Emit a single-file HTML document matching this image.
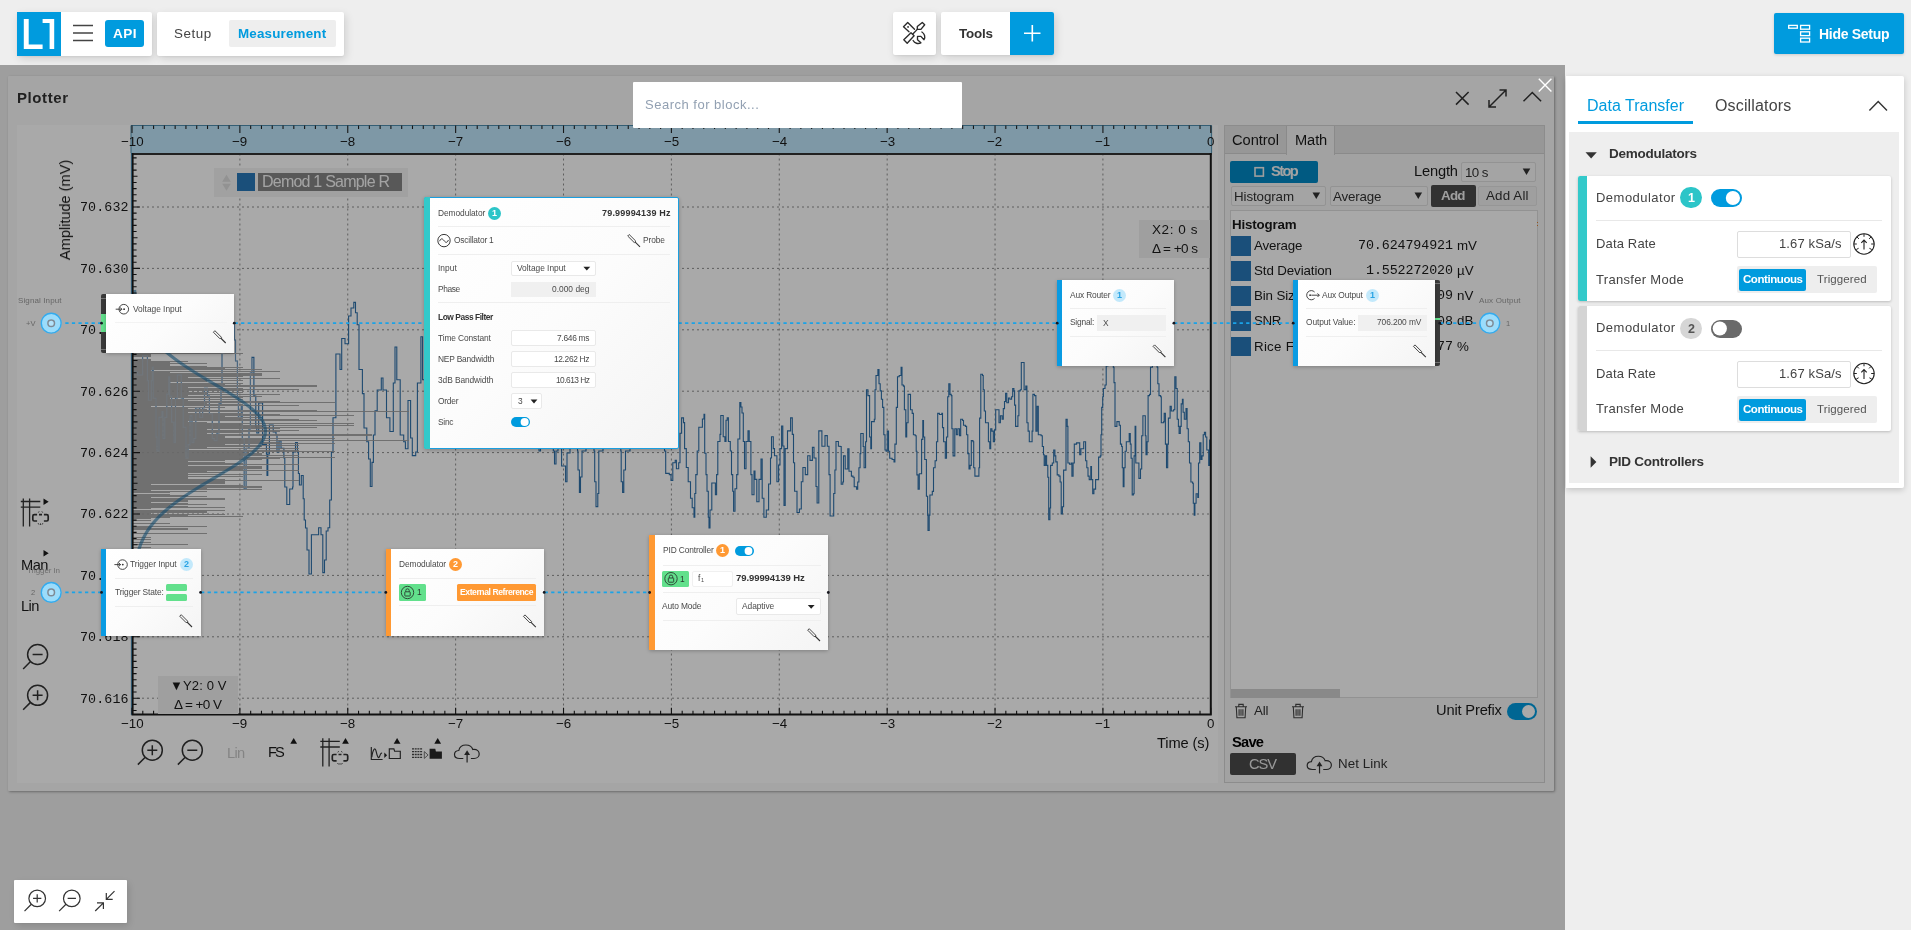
<!DOCTYPE html><html lang="en"><head><meta charset="utf-8"><title>LabOne</title><style>
*{box-sizing:border-box;margin:0;padding:0}
html,body{width:1911px;height:930px;overflow:hidden;background:#eeeeee;font-family:"Liberation Sans",sans-serif;}
.b{position:absolute;display:block}
.t{position:absolute;white-space:nowrap;}
.t{will-change:transform}
.card{position:absolute;background:#fff;border-radius:2px;box-shadow:2px 3px 8px rgba(0,0,0,.13),0 1px 2px rgba(0,0,0,.05)}
.blk{position:absolute;background:linear-gradient(135deg,#ffffff 0%,#fcfcfc 50%,#f4f4f4 100%);box-shadow:0 1px 4px rgba(0,0,0,.25)}
.dv{position:absolute;height:1px;background:#efefef}
</style></head><body>
<div class="card" style="left:17px;top:12px;width:135px;height:44px"></div>
<div class="b" style="left:17.00px;top:12.00px;width:44.00px;height:44.00px;background:#009bde;"></div>
<svg class="b" style="left:17px;top:12px;overflow:visible;" width="45" height="45" viewBox="0 0 45 45"><path d="M6.8 6.9h4.9v25.6h13.9v4.4H6.8z M25.6 6.9h11.6v30h-4.6V11.1h-7z" fill="#fff"/></svg>
<svg class="b" style="left:70px;top:20px;overflow:visible;" width="29" height="29" viewBox="0 0 29 29"><path d="M3 5.5h20M3 13h20M3 20.5h20" stroke="#444" stroke-width="1.5" fill="none"/></svg>
<div class="b" style="left:105.00px;top:20.00px;width:39.00px;height:27.00px;background:#009bde;border-radius:3px;"></div>
<div class="t" style="left:112.75px;top:24.68px;font-size:13.6px;line-height:17.68px;color:#fff;font-weight:bold;letter-spacing:0.414px;">API</div>
<div class="card" style="left:157px;top:12px;width:187px;height:44px"></div>
<div class="t" style="left:174.40px;top:24.79px;font-size:13.4px;line-height:17.42px;color:#444;letter-spacing:0.545px;">Setup</div>
<div class="b" style="left:229.00px;top:20.00px;width:107.00px;height:27.00px;background:#eeeeee;border-radius:2px;"></div>
<div class="t" style="left:238.40px;top:24.79px;font-size:13.4px;line-height:17.42px;color:#009bde;font-weight:bold;letter-spacing:0.181px;">Measurement</div>
<div class="card" style="left:893px;top:12px;width:43px;height:43px"></div>
<svg class="b" style="left:893px;top:12px;overflow:visible;" width="44" height="44" viewBox="0 0 44 44"><g fill="none" stroke="#2b2b2b" stroke-width="1.35" stroke-linejoin="round" stroke-linecap="round">
<path d="M21.500 17.300L14.700 10.500 10.500 14.700 16 19.700"/><circle cx="15.100" cy="15" r="0.300"/>
<path d="M10.800 27.700l3.400 3.500 6.900-7.500-3.100-3z"/><path d="M19.600 22.300l4.700-4.900"/>
<path d="M24.300 17.400v-2.900l5-4.100 2.400 2.400-3.800 4.600z"/>
<path d="M28.900 20c2.600 1.600 3.800 5 2.100 7.700l-3.100-3.300h-3.400v3.300l3.400 3.100c-2.900 1.600-6.300 0.400-7.800-2.300"/>
</g></svg>
<div class="card" style="left:941px;top:12px;width:113px;height:43px"></div>
<div class="t" style="left:958.70px;top:24.79px;font-size:13.4px;line-height:17.42px;color:#333;font-weight:bold;letter-spacing:-0.184px;">Tools</div>
<div class="b" style="left:1010.30px;top:12.00px;width:43.70px;height:43.00px;background:#009bde;border-radius:0 2px 2px 0;"></div>
<svg class="b" style="left:1010px;top:12px;overflow:visible;" width="45" height="44" viewBox="0 0 45 44"><g transform="translate(0.300,0.000)"><path d="M22 13.0v16.500M13.700 21.300h16.500" stroke="#fff" stroke-width="1.6" fill="none"/></g></svg>
<div class="b" style="left:1774.20px;top:13.00px;width:129.80px;height:41.00px;background:#009bde;border-radius:2px;box-shadow:0 1px 3px rgba(0,0,0,.15);"></div>
<svg class="b" style="left:1786px;top:22px;overflow:visible;" width="29" height="25" viewBox="0 0 29 25"><g fill="none" stroke="#fff" stroke-width="1.3"><rect x="2.7" y="3.4" width="8.6" height="2.8"/><rect x="14.6" y="3.4" width="9" height="3.8"/><rect x="14.6" y="9.8" width="9" height="3.8"/><rect x="14.6" y="16.2" width="9" height="3.8"/></g></svg>
<div class="t" style="left:1819.00px;top:25.24px;font-size:14px;line-height:18.2px;color:#fff;font-weight:bold;letter-spacing:-0.291px;">Hide Setup</div>
<div class="b" style="left:0;top:65px;width:1565px;height:865px;background:#eeeeee;overflow:hidden">
<div class="b" style="left:0;top:-65px;width:1911px;height:930px">
<div class="b" style="left:8.00px;top:76.00px;width:1546.00px;height:714.80px;background:#f9f9f9;box-shadow:1px 1px 2.5px rgba(0,0,0,.32);border-radius:1px;"></div>
<div class="t" style="left:17.00px;top:88.45px;font-size:15px;line-height:19.5px;color:#333;font-weight:bold;letter-spacing:0.582px;">Plotter</div>
<svg class="b" style="left:1452px;top:87px;overflow:visible;" width="101" height="25" viewBox="0 0 101 25"><g fill="none" stroke="#333" stroke-width="1.5" stroke-linecap="butt">
<path d="M4 5l12.6 12.6M16.6 5L4 17.6"/>
<path d="M37.500 19.500l16-16M47.500 3h6.500v6.500M37 13v7h7"/>
<path d="M71.5 14.3l8.8-8.8 8.8 8.8"/></g></svg>
<div class="b" style="left:17.00px;top:125.00px;width:1201.00px;height:658.00px;background:#ffffff;"></div>
<svg class="b" style="left:0px;top:0px;overflow:visible;" width="1231" height="801" viewBox="0 0 1231 801"><rect x="131" y="125" width="1080.6" height="28" fill="#bfe6fb"/><path d="M131 153V125.5H1211.6V153" fill="none" stroke="#4f8fb0" stroke-width="1"/><path d="M132.00 125.5v7.5M142.79 125.5v3.6M153.58 125.5v3.6M164.36 125.5v3.6M175.15 125.5v3.6M185.94 125.5v3.6M196.73 125.5v3.6M207.52 125.5v3.6M218.30 125.5v3.6M229.09 125.5v3.6M239.88 125.5v7.5M250.67 125.5v3.6M261.46 125.5v3.6M272.24 125.5v3.6M283.03 125.5v3.6M293.82 125.5v3.6M304.61 125.5v3.6M315.40 125.5v3.6M326.18 125.5v3.6M336.97 125.5v3.6M347.76 125.5v7.5M358.55 125.5v3.6M369.34 125.5v3.6M380.12 125.5v3.6M390.91 125.5v3.6M401.70 125.5v3.6M412.49 125.5v3.6M423.28 125.5v3.6M434.06 125.5v3.6M444.85 125.5v3.6M455.64 125.5v7.5M466.43 125.5v3.6M477.22 125.5v3.6M488.00 125.5v3.6M498.79 125.5v3.6M509.58 125.5v3.6M520.37 125.5v3.6M531.16 125.5v3.6M541.94 125.5v3.6M552.73 125.5v3.6M563.52 125.5v7.5M574.31 125.5v3.6M585.10 125.5v3.6M595.88 125.5v3.6M606.67 125.5v3.6M617.46 125.5v3.6M628.25 125.5v3.6M639.04 125.5v3.6M649.82 125.5v3.6M660.61 125.5v3.6M671.40 125.5v7.5M682.19 125.5v3.6M692.98 125.5v3.6M703.76 125.5v3.6M714.55 125.5v3.6M725.34 125.5v3.6M736.13 125.5v3.6M746.92 125.5v3.6M757.70 125.5v3.6M768.49 125.5v3.6M779.28 125.5v7.5M790.07 125.5v3.6M800.86 125.5v3.6M811.64 125.5v3.6M822.43 125.5v3.6M833.22 125.5v3.6M844.01 125.5v3.6M854.80 125.5v3.6M865.58 125.5v3.6M876.37 125.5v3.6M887.16 125.5v7.5M897.95 125.5v3.6M908.74 125.5v3.6M919.52 125.5v3.6M930.31 125.5v3.6M941.10 125.5v3.6M951.89 125.5v3.6M962.68 125.5v3.6M973.46 125.5v3.6M984.25 125.5v3.6M995.04 125.5v7.5M1005.83 125.5v3.6M1016.62 125.5v3.6M1027.40 125.5v3.6M1038.19 125.5v3.6M1048.98 125.5v3.6M1059.77 125.5v3.6M1070.56 125.5v3.6M1081.34 125.5v3.6M1092.13 125.5v3.6M1102.92 125.5v7.5M1113.71 125.5v3.6M1124.50 125.5v3.6M1135.28 125.5v3.6M1146.07 125.5v3.6M1156.86 125.5v3.6M1167.65 125.5v3.6M1178.44 125.5v3.6M1189.22 125.5v3.6M1200.01 125.5v3.6M1210.80 125.5v7.5" stroke="#222" stroke-width="1.1" fill="none"/><path d="M239.88 153.5V714.5M347.76 153.5V714.5M455.64 153.5V714.5M563.52 153.5V714.5M671.40 153.5V714.5M779.28 153.5V714.5M887.16 153.5V714.5M995.04 153.5V714.5M1102.92 153.5V714.5M132.0 207.00H1210.8M132.0 268.40H1210.8M132.0 329.80H1210.8M132.0 391.20H1210.8M132.0 452.60H1210.8M132.0 514.00H1210.8M132.0 575.40H1210.8M132.0 636.80H1210.8M132.0 698.20H1210.8" stroke="#8e8e8e" stroke-width="1" stroke-dasharray="2 3" fill="none"/><clipPath id="pc"><rect x="132.0" y="153.5" width="1078.8" height="561.0"/></clipPath><path clip-path="url(#pc)" d="M133.0,372.0H137.7V374.8H142.6V355.5H146.5V355.5H147.4V380.6H148.4V400.0H151.3V380.6H152.3V367.0H153.2V398.0H156.0V436.8H157.0V451.0H159.0V417.0H162.0V411.6H163.0V438.7H164.8V417.4H166.8V394.0H168.7V376.8H169.7V396.0H171.6V422.0H174.0V442.6H175.5V398.0H177.4V374.8H179.4V374.8H181.3V398.0H183.2V427.0H186.0V458.0H188.0V444.5H190.0V415.5H192.0V442.6H193.9V438.7H195.8V407.7H199.7V417.4H202.6V407.7H204.5V388.4H207.4V396.0H209.4V413.5H212.3V438.7H214.2V440.6H217.0V433.0H219.0V403.9H221.0V388.4H222.0V353.5H224.0V330.0H228.0V318.0H232.0V325.0H234.5V340.0H235.5V361.0H237.4V398.0H238.4V417.4H241.3V405.8H242.3V438.7H244.2V489.0H246.1V448.4H249.0V429.0H250.4V373.0H251.9V357.4H253.9V396.0H255.8V427.0H256.8V433.0H258.7V403.0H261.6V403.0H262.6V444.5H266.4V454.0H267.0V475.5H267.8V454.0H269.4V425.0H273.2V432.0H276.0V434.8H277.0V452.0H279.0V440.6H281.0V448.4H283.9V458.0H284.8V487.0H286.8V504.5H288.5V504.5H289.7V489.0H292.6V487.0H293.0V452.0H295.5V442.6H297.4V452.0H298.4V473.5H299.4V485.0H301.3V475.5H303.2V498.7H304.2V520.0H305.5V528.0H307.0V550.0H309.0V574.0H311.4V534.7H314.0V534.7H318.6V527.8H321.0V534.7H322.8V572.6H324.5V560.0H326.2V531.0H328.0V527.8H329.7V500.0H331.4V452.0H333.0V417.7H335.9V354.0H339.0V354.0H340.0V369.5H341.7V338.5H345.0V343.7H347.4V343.7H348.6V316.0H351.0V308.0H353.8V302.4H355.5V312.7H357.2V324.7H359.0V369.5H362.4V393.6H364.0V428.0H366.8V441.8H368.6V459.0H370.3V486.5H372.0V462.4H373.4V435.0H375.0V410.8H377.2V390.0H381.3V378.0H383.0V390.0H386.5V417.7H389.9V431.5H393.3V383.0H395.0V347.0H396.8V379.8H400.2V435.0H403.7V441.8H405.4V448.7H408.0V400.5H410.6V438.0H412.3V455.6H415.7V452.0H417.4V383.0H420.9V336.8H422.6V379.8H426.0V420.0H430.0V400.0H436.0V430.0H440.0V395.0H446.0V425.0H452.0V440.0H458.0V410.0H464.0V380.0H470.0V415.0H478.0V440.0H486.0V400.0H494.0V430.0H502.0V445.0H510.0V410.0H520.0V435.0H530.0V440.0H538.0V445.0H539.0V451.0H540.5V445.0H546.0V430.0H552.0V440.0H553.3V451.0H554.5V464.0H556.0V451.0H558.0V445.0H561.6V466.0H564.0V466.0H565.6V481.7H567.0V453.0H570.0V440.0H574.0V445.0H577.5V451.0H578.0V470.0H579.4V492.4H580.5V477.0H582.0V451.0H586.0V440.0H590.0V445.0H594.0V451.0H594.7V481.7H596.0V506.6H597.8V493.5H598.8V451.0H603.0V440.0H608.0V430.0H614.0V445.0H620.8V451.0H621.2V481.7H622.6V492.4H623.8V470.0H625.5V451.0H630.0V440.0H636.0V425.0H642.0V440.0H648.0V420.0H654.0V440.0H660.0V445.0H664.5V451.0H665.7V473.4H669.3V474.6H671.0V480.5H672.8V462.8H675.2V460.4H676.4V468.7H678.7V462.8H680.0V433.2H681.6V417.9H683.5V422.6H684.6V448.6H686.3V467.5H688.2V481.7H690.5V498.3H692.2V507.7H694.0V517.2H694.8V493.5H695.8V474.6H697.2V451.0H698.8V427.3H702.4V419.0H704.0V414.3H704.7V453.3H706.0V474.6H707.0V491.2H708.3V517.2H709.0V527.9H710.0V510.0H711.8V483.0H714.0V483.0H715.4V494.7H716.6V474.6H717.8V441.5H720.0V434.4H720.8V415.5H722.5V415.5H723.2V436.8H724.9V441.5H726.0V420.2H727.2V417.9H728.4V441.5H730.3V451.0H731.5V474.6H732.7V491.2H733.6V511.3H735.0V488.8H736.7V474.6H737.9V439.0H739.8V402.5H740.9V407.0H742.0V413.0H743.3V441.5H744.5V468.7H746.0V441.5H748.0V430.9H749.2V441.5H750.9V474.6H752.0V494.7H754.0V471.0H755.0V479.4H756.8V501.8H759.0V479.4H761.0V459.0H762.2V498.3H763.9V517.2H766.3V510.0H768.6V484.0H770.5V458.0H771.5V436.8H773.3V448.6H774.5V455.7H776.9V481.7H778.6V465.0H780.0V448.6H781.6V426.0H782.8V446.0H784.0V505.4H785.2V448.6H787.5V430.9H790.6V417.9H792.3V434.4H793.5V462.8H794.6V491.2H797.0V512.5H799.4V509.0H801.3V481.7H802.9V467.5H805.3V474.6H807.7V455.7H810.0V460.4H812.4V447.4H814.0V458.0H816.0V486.5H817.1V503.0H818.8V430.9H820.5V430.9H821.9V446.2H825.0V435.6H827.3V446.2H829.0V474.6H830.1V516.0H832.0V516.0H833.7V493.5H834.9V470.0H836.0V441.5H838.4V446.2H840.0V446.5H841.2V484.3H842.8V482.0H843.5V455.9H845.2V469.0H847.1V469.0H847.8V448.8H849.0V471.3H851.4V476.1H853.0V477.2H854.2V486.7H856.6V489.1H857.7V482.0H858.9V467.8H860.1V453.6H860.8V433.5H862.5V433.5H863.2V446.5H864.1V467.8H865.6V441.8H866.5V389.7H867.9V395.6H869.6V437.0H870.8V448.8H871.5V421.6H874.3V419.3H875.0V389.7H876.0V375.5H877.9V369.6H879.0V383.8H880.2V390.9H881.4V399.2H882.6V407.4H883.8V434.7H885.0V450.0H886.1V451.2H887.3V431.1H888.5V451.2H889.7V458.3H892.1V459.5H894.0V461.9H894.9V444.1H896.3V407.4H897.5V376.7H899.2V375.5H901.1V367.2H902.0V385.0H903.4V386.1H904.4V409.8H905.8V437.0H906.7V422.8H908.1V394.4H909.8V394.4H910.5V409.8H912.2V413.4H913.4V434.7H915.2V435.8H916.2V451.2H916.9V474.9H918.1V489.1H919.3V473.7H920.5V473.7H921.6V439.4H922.8V420.5H923.5V437.0H924.7V459.5H926.4V496.2H927.6V515.1H928.0V530.5H929.2V515.1H929.9V495.0H932.3V491.4H933.5V467.8H935.1V460.7H936.5V441.8H937.7V413.4H939.4V414.5H941.8V413.4H942.5V427.6H943.6V441.8H945.3V458.3H946.5V437.0H947.7V396.8H948.8V383.8H950.0V394.4H951.2V395.6H951.9V428.7H953.1V455.9H954.8V428.7H956.4V434.7H957.8V428.7H959.5V435.8H960.7V419.3H962.6V420.5H963.5V425.2H965.4V426.4H966.6V434.7H967.8V453.6H969.0V469.0H970.1V465.4H971.3V440.6H973.0V441.8H973.7V467.8H974.9V476.1H977.2V476.1H978.9V467.8H979.6V418.1H980.8V374.3H982.5V375.5H983.2V389.7H984.3V411.0H985.5V422.8H987.2V422.8H988.4V441.8H989.8V448.8H990.7V428.7H991.9V431.1H993.3V441.8H994.5V429.9H995.7V409.8H998.1V409.8H999.0V422.8H1000.4V415.7H1002.1V419.3H1003.3V408.6H1004.5V401.5H1005.6V393.2H1006.8V402.7H1008.5V398.0H1009.9V399.2H1011.6V396.8H1012.7V388.5H1013.9V390.9H1014.6V405.1H1015.6V426.4H1017.0V426.4H1017.9V415.7H1018.9V390.9H1020.3V389.7H1021.3V362.5H1023.4V362.5H1024.1V389.7H1025.8V386.1H1026.9V422.8H1028.1V431.1H1029.3V441.8H1031.2V441.8H1032.1V431.1H1032.9V394.4H1034.5V395.6H1035.9V431.1H1037.1V406.3H1038.3V434.7H1041.1V435.8H1042.3V446.5H1043.5V454.8H1044.2V465.4H1045.4V455.9H1046.6V465.4H1047.8V477.2H1048.7V519.8H1049.9V508.0H1050.6V465.4H1052.3V463.0H1053.7V450.0H1054.9V455.9H1055.8V461.9H1057.2V474.9H1058.9V476.1H1060.1V482.0H1061.2V513.9H1062.4V506.8H1063.6V470.1H1065.3V470.1H1066.0V419.3H1067.2V426.4H1067.9V463.0H1069.5V464.2H1071.2V463.0H1071.9V476.1H1073.1V463.0H1074.3V444.1H1076.6V442.9H1079.0V442.9H1079.7V454.8H1080.9V448.8H1082.5V448.8H1083.7V441.8H1084.9V441.8H1085.6V460.7H1086.8V467.8H1088.0V476.1H1089.2V479.6H1090.8V466.6H1091.5V479.6H1092.7V493.8H1093.9V489.1H1095.6V479.6H1097.9V479.6H1098.6V457.1H1100.3V455.9H1101.0V434.7H1101.7V407.4H1102.7V396.8H1103.4V388.5H1105.0V385.0H1106.2V366.0H1107.9V354.2H1109.8V349.5H1111.7V356.6H1113.3V367.2H1114.0V382.6H1115.0V426.4H1116.9V421.6H1119.2V425.2H1120.4V444.1H1121.6V446.5H1122.3V467.8H1123.2V486.7H1124.0V467.8H1125.1V451.2H1126.3V441.8H1128.2V441.8H1129.2V433.5H1130.3V444.1H1131.1V458.3H1132.2V495.0H1133.4V493.8H1134.1V455.9H1135.1V426.4H1135.8V463.0H1137.7V463.0H1138.9V478.4H1140.5V469.0H1141.7V435.8H1142.9V415.7H1144.1V415.7H1145.3V435.8H1146.0V454.8H1147.1V441.8H1148.1V395.6H1149.5V394.4H1150.5V367.2H1152.4V354.2H1154.7V351.8H1157.1V367.2H1157.8V383.8H1159.0V395.6H1160.6V396.8H1161.3V422.8H1163.7V421.6H1164.2V413.4H1165.4V444.1H1166.5V467.8H1167.7V444.1H1168.4V418.1H1170.1V406.3H1171.3V411.0H1173.6V409.8H1174.8V376.7H1176.0V388.5H1177.2V419.3H1178.4V426.4H1179.1V433.5H1180.3V426.4H1181.2V403.9H1182.4V399.2H1183.1V412.2H1184.3V419.3H1186.0V408.6H1187.1V428.7H1188.3V441.8H1189.5V463.0H1190.9V482.0H1192.6V483.2H1193.3V503.3H1194.2V515.1H1194.9V503.3H1196.1V493.8H1197.8V497.4H1198.5V463.0H1199.7V442.9H1200.9V459.5H1202.0V455.9H1203.2V434.7H1204.4V432.3H1205.6V437.0H1206.8V450.0H1208.0V450.0H1208.7V465.4H1209.6V439.4" fill="none" stroke="#2e70aa" stroke-width="1.1" stroke-linejoin="miter"/><path clip-path="url(#pc)" d="M133.0 302.5h18.4M133.0 312.5h18.4M133.0 314.5h36.8M133.0 316.5h18.4M133.0 317.5h18.4M133.0 321.5h18.4M133.0 322.5h36.8M133.0 323.5h18.4M133.0 326.5h18.4M133.0 327.5h18.4M133.0 328.5h18.4M133.0 329.5h36.8M133.0 330.5h36.8M133.0 331.5h18.4M133.0 332.5h18.4M133.0 333.5h36.8M133.0 334.5h18.4M133.0 335.5h73.6M133.0 336.5h55.2M133.0 337.5h73.6M133.0 338.5h73.6M133.0 339.5h36.8M133.0 340.5h18.4M133.0 343.5h18.4M133.0 344.5h18.4M133.0 345.5h18.4M133.0 346.5h92.0M133.0 347.5h73.6M133.0 348.5h18.4M133.0 349.5h36.8M133.0 350.5h18.4M133.0 351.5h55.2M133.0 352.5h73.6M133.0 353.5h110.4M133.0 354.5h18.4M133.0 355.5h18.4M133.0 356.5h18.4M133.0 359.5h18.4M133.0 360.5h18.4M133.0 361.5h55.2M133.0 362.5h36.8M133.0 363.5h73.6M133.0 364.5h36.8M133.0 365.5h36.8M133.0 366.5h73.6M133.0 367.5h110.4M133.0 368.5h92.0M133.0 369.5h128.8M133.0 370.5h18.4M133.0 371.5h147.2M133.0 372.5h36.8M133.0 373.5h128.8M133.0 374.5h128.8M133.0 375.5h128.8M133.0 376.5h110.4M133.0 377.5h55.2M133.0 378.5h147.2M133.0 379.5h73.6M133.0 380.5h110.4M133.0 381.5h73.6M133.0 382.5h36.8M133.0 383.5h110.4M133.0 384.5h92.0M133.0 385.5h184.0M133.0 386.5h184.0M133.0 387.5h55.2M133.0 388.5h110.4M133.0 389.5h165.6M133.0 390.5h110.4M133.0 391.5h55.2M133.0 392.5h110.4M133.0 393.5h73.6M133.0 394.5h147.2M133.0 395.5h55.2M133.0 396.5h128.8M133.0 397.5h110.4M133.0 398.5h36.8M133.0 399.5h110.4M133.0 400.5h55.2M133.0 401.5h147.2M133.0 402.5h202.4M133.0 403.5h73.6M133.0 404.5h110.4M133.0 405.5h165.6M133.0 406.5h18.4M133.0 407.5h92.0M133.0 408.5h55.2M133.0 409.5h73.6M133.0 410.5h184.0M133.0 411.5h276.0M133.0 412.5h55.2M133.0 413.5h110.4M133.0 414.5h147.2M133.0 415.5h220.8M133.0 416.5h92.0M133.0 417.5h128.8M133.0 418.5h110.4M133.0 419.5h165.6M133.0 420.5h184.0M133.0 421.5h55.2M133.0 422.5h73.6M133.0 423.5h220.8M133.0 424.5h110.4M133.0 425.5h220.8M133.0 426.5h128.8M133.0 427.5h184.0M133.0 428.5h147.2M133.0 429.5h73.6M133.0 430.5h165.6M133.0 431.5h147.2M133.0 432.5h110.4M133.0 433.5h73.6M133.0 434.5h239.2M133.0 435.5h239.2M133.0 436.5h92.0M133.0 437.5h92.0M133.0 438.5h202.4M133.0 439.5h128.8M133.0 440.5h276.0M133.0 441.5h128.8M133.0 442.5h147.2M133.0 443.5h202.4M133.0 444.5h92.0M133.0 445.5h165.6M133.0 446.5h128.8M133.0 447.5h73.6M133.0 448.5h165.6M133.0 449.5h55.2M133.0 450.5h165.6M133.0 451.5h202.4M133.0 452.5h110.4M133.0 453.5h128.8M133.0 454.5h128.8M133.0 455.5h165.6M133.0 456.5h110.4M133.0 457.5h202.4M133.0 458.5h147.2M133.0 459.5h128.8M133.0 460.5h92.0M133.0 461.5h55.2M133.0 462.5h92.0M133.0 463.5h110.4M133.0 464.5h165.6M133.0 465.5h55.2M133.0 466.5h128.8M133.0 467.5h128.8M133.0 468.5h128.8M133.0 469.5h110.4M133.0 470.5h165.6M133.0 471.5h73.6M133.0 472.5h92.0M133.0 473.5h55.2M133.0 474.5h128.8M133.0 475.5h55.2M133.0 476.5h110.4M133.0 477.5h55.2M133.0 478.5h55.2M133.0 479.5h92.0M133.0 480.5h165.6M133.0 481.5h92.0M133.0 482.5h92.0M133.0 483.5h92.0M133.0 484.5h18.4M133.0 485.5h110.4M133.0 486.5h128.8M133.0 487.5h128.8M133.0 488.5h73.6M133.0 489.5h128.8M133.0 490.5h18.4M133.0 491.5h73.6M133.0 492.5h36.8M133.0 494.5h36.8M133.0 495.5h55.2M133.0 496.5h73.6M133.0 497.5h18.4M133.0 498.5h92.0M133.0 499.5h92.0M133.0 500.5h55.2M133.0 501.5h55.2M133.0 502.5h18.4M133.0 503.5h55.2M133.0 504.5h73.6M133.0 505.5h36.8M133.0 506.5h55.2M133.0 507.5h92.0M133.0 508.5h18.4M133.0 510.5h92.0M133.0 511.5h73.6M133.0 512.5h73.6M133.0 513.5h18.4M133.0 514.5h92.0M133.0 515.5h55.2M133.0 516.5h110.4M133.0 517.5h36.8M133.0 518.5h18.4M133.0 520.5h18.4M133.0 523.5h36.8M133.0 526.5h73.6M133.0 527.5h18.4M133.0 528.5h55.2M133.0 529.5h55.2M133.0 533.5h73.6M133.0 537.5h18.4M133.0 539.5h18.4M133.0 542.5h18.4M133.0 544.5h55.2M133.0 547.5h18.4M133.0 549.5h18.4M133.0 551.5h18.4M133.0 552.5h18.4M133.0 555.5h36.8M133.0 558.5h18.4M133.0 561.5h18.4M133.0 562.5h18.4M133.0 564.5h18.4M133.0 566.5h18.4M133.0 567.5h18.4M133.0 568.5h18.4M133.0 572.5h18.4M133.0 573.5h18.4M133.0 576.5h18.4M133.0 578.5h18.4M133.0 581.5h18.4M133.0 586.5h18.4M133.0 590.5h18.4M133.0 593.5h18.4M133.0 597.5h18.4" stroke="#a0a0a0" stroke-opacity=".9" stroke-width="1" fill="none" shape-rendering="crispEdges"/><clipPath id="hc"><rect x="132.0" y="153.5" width="120" height="561.0"/></clipPath><path clip-path="url(#hc)" d="M133.0,372.0H137.7V374.8H142.6V355.5H146.5V355.5H147.4V380.6H148.4V400.0H151.3V380.6H152.3V367.0H153.2V398.0H156.0V436.8H157.0V451.0H159.0V417.0H162.0V411.6H163.0V438.7H164.8V417.4H166.8V394.0H168.7V376.8H169.7V396.0H171.6V422.0H174.0V442.6H175.5V398.0H177.4V374.8H179.4V374.8H181.3V398.0H183.2V427.0H186.0V458.0H188.0V444.5H190.0V415.5H192.0V442.6H193.9V438.7H195.8V407.7H199.7V417.4H202.6V407.7H204.5V388.4H207.4V396.0H209.4V413.5H212.3V438.7H214.2V440.6H217.0V433.0H219.0V403.9H221.0V388.4H222.0V353.5H224.0V330.0H228.0V318.0H232.0V325.0H234.5V340.0H235.5V361.0H237.4V398.0H238.4V417.4H241.3V405.8H242.3V438.7H244.2V489.0H246.1V448.4H249.0V429.0H250.4V373.0H251.9V357.4H253.9V396.0H255.8V427.0H256.8V433.0H258.7V403.0H261.6V403.0H262.6V444.5H266.4V454.0H267.0V475.5H267.8V454.0H269.4V425.0H273.2V432.0H276.0V434.8H277.0V452.0H279.0V440.6H281.0V448.4H283.9V458.0H284.8V487.0H286.8V504.5H288.5V504.5H289.7V489.0H292.6V487.0H293.0V452.0H295.5V442.6H297.4V452.0H298.4V473.5H299.4V485.0H301.3V475.5H303.2V498.7H304.2V520.0H305.5V528.0H307.0V550.0H309.0V574.0H311.4V534.7H314.0V534.7H318.6V527.8H321.0V534.7H322.8V572.6H324.5V560.0H326.2V531.0H328.0V527.8H329.7V500.0H331.4V452.0H333.0V417.7H335.9V354.0H339.0V354.0H340.0V369.5H341.7V338.5H345.0V343.7H347.4V343.7H348.6V316.0H351.0V308.0H353.8V302.4H355.5V312.7H357.2V324.7H359.0V369.5H362.4V393.6H364.0V428.0H366.8V441.8H368.6V459.0H370.3V486.5H372.0V462.4H373.4V435.0H375.0V410.8H377.2V390.0H381.3V378.0H383.0V390.0H386.5V417.7H389.9V431.5H393.3V383.0H395.0V347.0H396.8V379.8H400.2V435.0H403.7V441.8H405.4V448.7H408.0V400.5H410.6V438.0H412.3V455.6H415.7V452.0H417.4V383.0H420.9V336.8H422.6V379.8H426.0V420.0H430.0V400.0H436.0V430.0H440.0V395.0H446.0V425.0H452.0V440.0H458.0V410.0H464.0V380.0H470.0V415.0H478.0V440.0H486.0V400.0H494.0V430.0H502.0V445.0H510.0V410.0H520.0V435.0H530.0V440.0H538.0V445.0H539.0V451.0H540.5V445.0H546.0V430.0H552.0V440.0H553.3V451.0H554.5V464.0H556.0V451.0H558.0V445.0H561.6V466.0H564.0V466.0H565.6V481.7H567.0V453.0H570.0V440.0H574.0V445.0H577.5V451.0H578.0V470.0H579.4V492.4H580.5V477.0H582.0V451.0H586.0V440.0H590.0V445.0H594.0V451.0H594.7V481.7H596.0V506.6H597.8V493.5H598.8V451.0H603.0V440.0H608.0V430.0H614.0V445.0H620.8V451.0H621.2V481.7H622.6V492.4H623.8V470.0H625.5V451.0H630.0V440.0H636.0V425.0H642.0V440.0H648.0V420.0H654.0V440.0H660.0V445.0H664.5V451.0H665.7V473.4H669.3V474.6H671.0V480.5H672.8V462.8H675.2V460.4H676.4V468.7H678.7V462.8H680.0V433.2H681.6V417.9H683.5V422.6H684.6V448.6H686.3V467.5H688.2V481.7H690.5V498.3H692.2V507.7H694.0V517.2H694.8V493.5H695.8V474.6H697.2V451.0H698.8V427.3H702.4V419.0H704.0V414.3H704.7V453.3H706.0V474.6H707.0V491.2H708.3V517.2H709.0V527.9H710.0V510.0H711.8V483.0H714.0V483.0H715.4V494.7H716.6V474.6H717.8V441.5H720.0V434.4H720.8V415.5H722.5V415.5H723.2V436.8H724.9V441.5H726.0V420.2H727.2V417.9H728.4V441.5H730.3V451.0H731.5V474.6H732.7V491.2H733.6V511.3H735.0V488.8H736.7V474.6H737.9V439.0H739.8V402.5H740.9V407.0H742.0V413.0H743.3V441.5H744.5V468.7H746.0V441.5H748.0V430.9H749.2V441.5H750.9V474.6H752.0V494.7H754.0V471.0H755.0V479.4H756.8V501.8H759.0V479.4H761.0V459.0H762.2V498.3H763.9V517.2H766.3V510.0H768.6V484.0H770.5V458.0H771.5V436.8H773.3V448.6H774.5V455.7H776.9V481.7H778.6V465.0H780.0V448.6H781.6V426.0H782.8V446.0H784.0V505.4H785.2V448.6H787.5V430.9H790.6V417.9H792.3V434.4H793.5V462.8H794.6V491.2H797.0V512.5H799.4V509.0H801.3V481.7H802.9V467.5H805.3V474.6H807.7V455.7H810.0V460.4H812.4V447.4H814.0V458.0H816.0V486.5H817.1V503.0H818.8V430.9H820.5V430.9H821.9V446.2H825.0V435.6H827.3V446.2H829.0V474.6H830.1V516.0H832.0V516.0H833.7V493.5H834.9V470.0H836.0V441.5H838.4V446.2H840.0V446.5H841.2V484.3H842.8V482.0H843.5V455.9H845.2V469.0H847.1V469.0H847.8V448.8H849.0V471.3H851.4V476.1H853.0V477.2H854.2V486.7H856.6V489.1H857.7V482.0H858.9V467.8H860.1V453.6H860.8V433.5H862.5V433.5H863.2V446.5H864.1V467.8H865.6V441.8H866.5V389.7H867.9V395.6H869.6V437.0H870.8V448.8H871.5V421.6H874.3V419.3H875.0V389.7H876.0V375.5H877.9V369.6H879.0V383.8H880.2V390.9H881.4V399.2H882.6V407.4H883.8V434.7H885.0V450.0H886.1V451.2H887.3V431.1H888.5V451.2H889.7V458.3H892.1V459.5H894.0V461.9H894.9V444.1H896.3V407.4H897.5V376.7H899.2V375.5H901.1V367.2H902.0V385.0H903.4V386.1H904.4V409.8H905.8V437.0H906.7V422.8H908.1V394.4H909.8V394.4H910.5V409.8H912.2V413.4H913.4V434.7H915.2V435.8H916.2V451.2H916.9V474.9H918.1V489.1H919.3V473.7H920.5V473.7H921.6V439.4H922.8V420.5H923.5V437.0H924.7V459.5H926.4V496.2H927.6V515.1H928.0V530.5H929.2V515.1H929.9V495.0H932.3V491.4H933.5V467.8H935.1V460.7H936.5V441.8H937.7V413.4H939.4V414.5H941.8V413.4H942.5V427.6H943.6V441.8H945.3V458.3H946.5V437.0H947.7V396.8H948.8V383.8H950.0V394.4H951.2V395.6H951.9V428.7H953.1V455.9H954.8V428.7H956.4V434.7H957.8V428.7H959.5V435.8H960.7V419.3H962.6V420.5H963.5V425.2H965.4V426.4H966.6V434.7H967.8V453.6H969.0V469.0H970.1V465.4H971.3V440.6H973.0V441.8H973.7V467.8H974.9V476.1H977.2V476.1H978.9V467.8H979.6V418.1H980.8V374.3H982.5V375.5H983.2V389.7H984.3V411.0H985.5V422.8H987.2V422.8H988.4V441.8H989.8V448.8H990.7V428.7H991.9V431.1H993.3V441.8H994.5V429.9H995.7V409.8H998.1V409.8H999.0V422.8H1000.4V415.7H1002.1V419.3H1003.3V408.6H1004.5V401.5H1005.6V393.2H1006.8V402.7H1008.5V398.0H1009.9V399.2H1011.6V396.8H1012.7V388.5H1013.9V390.9H1014.6V405.1H1015.6V426.4H1017.0V426.4H1017.9V415.7H1018.9V390.9H1020.3V389.7H1021.3V362.5H1023.4V362.5H1024.1V389.7H1025.8V386.1H1026.9V422.8H1028.1V431.1H1029.3V441.8H1031.2V441.8H1032.1V431.1H1032.9V394.4H1034.5V395.6H1035.9V431.1H1037.1V406.3H1038.3V434.7H1041.1V435.8H1042.3V446.5H1043.5V454.8H1044.2V465.4H1045.4V455.9H1046.6V465.4H1047.8V477.2H1048.7V519.8H1049.9V508.0H1050.6V465.4H1052.3V463.0H1053.7V450.0H1054.9V455.9H1055.8V461.9H1057.2V474.9H1058.9V476.1H1060.1V482.0H1061.2V513.9H1062.4V506.8H1063.6V470.1H1065.3V470.1H1066.0V419.3H1067.2V426.4H1067.9V463.0H1069.5V464.2H1071.2V463.0H1071.9V476.1H1073.1V463.0H1074.3V444.1H1076.6V442.9H1079.0V442.9H1079.7V454.8H1080.9V448.8H1082.5V448.8H1083.7V441.8H1084.9V441.8H1085.6V460.7H1086.8V467.8H1088.0V476.1H1089.2V479.6H1090.8V466.6H1091.5V479.6H1092.7V493.8H1093.9V489.1H1095.6V479.6H1097.9V479.6H1098.6V457.1H1100.3V455.9H1101.0V434.7H1101.7V407.4H1102.7V396.8H1103.4V388.5H1105.0V385.0H1106.2V366.0H1107.9V354.2H1109.8V349.5H1111.7V356.6H1113.3V367.2H1114.0V382.6H1115.0V426.4H1116.9V421.6H1119.2V425.2H1120.4V444.1H1121.6V446.5H1122.3V467.8H1123.2V486.7H1124.0V467.8H1125.1V451.2H1126.3V441.8H1128.2V441.8H1129.2V433.5H1130.3V444.1H1131.1V458.3H1132.2V495.0H1133.4V493.8H1134.1V455.9H1135.1V426.4H1135.8V463.0H1137.7V463.0H1138.9V478.4H1140.5V469.0H1141.7V435.8H1142.9V415.7H1144.1V415.7H1145.3V435.8H1146.0V454.8H1147.1V441.8H1148.1V395.6H1149.5V394.4H1150.5V367.2H1152.4V354.2H1154.7V351.8H1157.1V367.2H1157.8V383.8H1159.0V395.6H1160.6V396.8H1161.3V422.8H1163.7V421.6H1164.2V413.4H1165.4V444.1H1166.5V467.8H1167.7V444.1H1168.4V418.1H1170.1V406.3H1171.3V411.0H1173.6V409.8H1174.8V376.7H1176.0V388.5H1177.2V419.3H1178.4V426.4H1179.1V433.5H1180.3V426.4H1181.2V403.9H1182.4V399.2H1183.1V412.2H1184.3V419.3H1186.0V408.6H1187.1V428.7H1188.3V441.8H1189.5V463.0H1190.9V482.0H1192.6V483.2H1193.3V503.3H1194.2V515.1H1194.9V503.3H1196.1V493.8H1197.8V497.4H1198.5V463.0H1199.7V442.9H1200.9V459.5H1202.0V455.9H1203.2V434.7H1204.4V432.3H1205.6V437.0H1206.8V450.0H1208.0V450.0H1208.7V465.4H1209.6V439.4" fill="none" stroke="#c8d4e2" stroke-opacity=".4" stroke-width="1.25"/><path clip-path="url(#pc)" d="M134.6 290L134.9 293L135.3 296L135.8 299L136.3 302L136.9 305L137.6 308L138.4 311L139.4 314L140.4 317L141.6 320L143.0 323L144.5 326L146.2 329L148.1 332L150.2 335L152.5 338L155.0 341L157.8 344L160.7 347L164.0 350L167.4 353L171.1 356L175.0 359L179.1 362L183.5 365L188.0 368L192.7 371L197.5 374L202.4 377L207.5 380L212.5 383L217.6 386L222.6 389L227.6 392L232.4 395L237.1 398L241.5 401L245.7 404L249.6 407L253.2 410L256.3 413L259.1 416L261.3 419L263.1 422L264.4 425L265.2 428L265.5 431L265.2 434L264.4 437L263.1 440L261.3 443L259.1 446L256.3 449L253.2 452L249.6 455L245.7 458L241.5 461L237.1 464L232.4 467L227.6 470L222.6 473L217.6 476L212.5 479L207.5 482L202.4 485L197.5 488L192.7 491L188.0 494L183.5 497L179.1 500L175.0 503L171.1 506L167.4 509L164.0 512L160.7 515L157.8 518L155.0 521L152.5 524L150.2 527L148.1 530L146.2 533L144.5 536L143.0 539L141.6 542L140.4 545L139.4 548L138.4 551L137.6 554L136.9 557L136.3 560L135.8 563L135.3 566L134.9 569L134.6 572L134.3 575L134.1 578L133.9 581L133.7 584L133.6 587L133.5 590L133.4 593L133.3 596L133.3 599" stroke="#1f74a8" stroke-opacity=".6" stroke-width="3.2" fill="none"/><path d="M131 154H1211.6" stroke="#333" stroke-width="2" fill="none"/><path d="M132.6 153V715.3M1210.8 153V715.3M131.5 714.6H1211.7" stroke="#1a1a1a" stroke-width="2" fill="none"/><path d="M131.4 153V715" stroke="#3a7fa8" stroke-width="1" fill="none"/><path d="M132.00 714.5v-6.8M142.79 714.5v-3.8M153.58 714.5v-3.8M164.36 714.5v-3.8M175.15 714.5v-3.8M185.94 714.5v-3.8M196.73 714.5v-3.8M207.52 714.5v-3.8M218.30 714.5v-3.8M229.09 714.5v-3.8M239.88 714.5v-6.8M250.67 714.5v-3.8M261.46 714.5v-3.8M272.24 714.5v-3.8M283.03 714.5v-3.8M293.82 714.5v-3.8M304.61 714.5v-3.8M315.40 714.5v-3.8M326.18 714.5v-3.8M336.97 714.5v-3.8M347.76 714.5v-6.8M358.55 714.5v-3.8M369.34 714.5v-3.8M380.12 714.5v-3.8M390.91 714.5v-3.8M401.70 714.5v-3.8M412.49 714.5v-3.8M423.28 714.5v-3.8M434.06 714.5v-3.8M444.85 714.5v-3.8M455.64 714.5v-6.8M466.43 714.5v-3.8M477.22 714.5v-3.8M488.00 714.5v-3.8M498.79 714.5v-3.8M509.58 714.5v-3.8M520.37 714.5v-3.8M531.16 714.5v-3.8M541.94 714.5v-3.8M552.73 714.5v-3.8M563.52 714.5v-6.8M574.31 714.5v-3.8M585.10 714.5v-3.8M595.88 714.5v-3.8M606.67 714.5v-3.8M617.46 714.5v-3.8M628.25 714.5v-3.8M639.04 714.5v-3.8M649.82 714.5v-3.8M660.61 714.5v-3.8M671.40 714.5v-6.8M682.19 714.5v-3.8M692.98 714.5v-3.8M703.76 714.5v-3.8M714.55 714.5v-3.8M725.34 714.5v-3.8M736.13 714.5v-3.8M746.92 714.5v-3.8M757.70 714.5v-3.8M768.49 714.5v-3.8M779.28 714.5v-6.8M790.07 714.5v-3.8M800.86 714.5v-3.8M811.64 714.5v-3.8M822.43 714.5v-3.8M833.22 714.5v-3.8M844.01 714.5v-3.8M854.80 714.5v-3.8M865.58 714.5v-3.8M876.37 714.5v-3.8M887.16 714.5v-6.8M897.95 714.5v-3.8M908.74 714.5v-3.8M919.52 714.5v-3.8M930.31 714.5v-3.8M941.10 714.5v-3.8M951.89 714.5v-3.8M962.68 714.5v-3.8M973.46 714.5v-3.8M984.25 714.5v-3.8M995.04 714.5v-6.8M1005.83 714.5v-3.8M1016.62 714.5v-3.8M1027.40 714.5v-3.8M1038.19 714.5v-3.8M1048.98 714.5v-3.8M1059.77 714.5v-3.8M1070.56 714.5v-3.8M1081.34 714.5v-3.8M1092.13 714.5v-3.8M1102.92 714.5v-6.8M1113.71 714.5v-3.8M1124.50 714.5v-3.8M1135.28 714.5v-3.8M1146.07 714.5v-3.8M1156.86 714.5v-3.8M1167.65 714.5v-3.8M1178.44 714.5v-3.8M1189.22 714.5v-3.8M1200.01 714.5v-3.8M1210.80 714.5v-6.8M133 157.88h3.6M133 164.02h3.6M133 170.16h3.6M133 176.30h4.5M133 182.44h3.6M133 188.58h3.6M133 194.72h3.6M133 200.86h3.6M133 207.00h7M133 213.14h3.6M133 219.28h3.6M133 225.42h3.6M133 231.56h3.6M133 237.70h4.5M133 243.84h3.6M133 249.98h3.6M133 256.12h3.6M133 262.26h3.6M133 268.40h7M133 274.54h3.6M133 280.68h3.6M133 286.82h3.6M133 292.96h3.6M133 299.10h4.5M133 305.24h3.6M133 311.38h3.6M133 317.52h3.6M133 323.66h3.6M133 329.80h7M133 335.94h3.6M133 342.08h3.6M133 348.22h3.6M133 354.36h3.6M133 360.50h4.5M133 366.64h3.6M133 372.78h3.6M133 378.92h3.6M133 385.06h3.6M133 391.20h7M133 397.34h3.6M133 403.48h3.6M133 409.62h3.6M133 415.76h3.6M133 421.90h4.5M133 428.04h3.6M133 434.18h3.6M133 440.32h3.6M133 446.46h3.6M133 452.60h7M133 458.74h3.6M133 464.88h3.6M133 471.02h3.6M133 477.16h3.6M133 483.30h4.5M133 489.44h3.6M133 495.58h3.6M133 501.72h3.6M133 507.86h3.6M133 514.00h7M133 520.14h3.6M133 526.28h3.6M133 532.42h3.6M133 538.56h3.6M133 544.70h4.5M133 550.84h3.6M133 556.98h3.6M133 563.12h3.6M133 569.26h3.6M133 575.40h7M133 581.54h3.6M133 587.68h3.6M133 593.82h3.6M133 599.96h3.6M133 606.10h4.5M133 612.24h3.6M133 618.38h3.6M133 624.52h3.6M133 630.66h3.6M133 636.80h7M133 642.94h3.6M133 649.08h3.6M133 655.22h3.6M133 661.36h3.6M133 667.50h4.5M133 673.64h3.6M133 679.78h3.6M133 685.92h3.6M133 692.06h3.6M133 698.20h7M133 704.34h3.6M133 710.48h3.6" stroke="#1a1a1a" stroke-width="1.1" fill="none"/></svg>
<div class="t" style="left:120.69px;top:133.03px;font-size:13.33px;line-height:17.33px;color:#1a1a1a;">−10</div>
<div class="t" style="left:120.69px;top:714.94px;font-size:13.33px;line-height:17.33px;color:#1a1a1a;">−10</div>
<div class="t" style="left:232.28px;top:133.03px;font-size:13.33px;line-height:17.33px;color:#1a1a1a;">−9</div>
<div class="t" style="left:232.28px;top:714.94px;font-size:13.33px;line-height:17.33px;color:#1a1a1a;">−9</div>
<div class="t" style="left:340.16px;top:133.03px;font-size:13.33px;line-height:17.33px;color:#1a1a1a;">−8</div>
<div class="t" style="left:340.16px;top:714.94px;font-size:13.33px;line-height:17.33px;color:#1a1a1a;">−8</div>
<div class="t" style="left:448.04px;top:133.03px;font-size:13.33px;line-height:17.33px;color:#1a1a1a;">−7</div>
<div class="t" style="left:448.04px;top:714.94px;font-size:13.33px;line-height:17.33px;color:#1a1a1a;">−7</div>
<div class="t" style="left:555.92px;top:133.03px;font-size:13.33px;line-height:17.33px;color:#1a1a1a;">−6</div>
<div class="t" style="left:555.92px;top:714.94px;font-size:13.33px;line-height:17.33px;color:#1a1a1a;">−6</div>
<div class="t" style="left:663.80px;top:133.03px;font-size:13.33px;line-height:17.33px;color:#1a1a1a;">−5</div>
<div class="t" style="left:663.80px;top:714.94px;font-size:13.33px;line-height:17.33px;color:#1a1a1a;">−5</div>
<div class="t" style="left:771.68px;top:133.03px;font-size:13.33px;line-height:17.33px;color:#1a1a1a;">−4</div>
<div class="t" style="left:771.68px;top:714.94px;font-size:13.33px;line-height:17.33px;color:#1a1a1a;">−4</div>
<div class="t" style="left:879.56px;top:133.03px;font-size:13.33px;line-height:17.33px;color:#1a1a1a;">−3</div>
<div class="t" style="left:879.56px;top:714.94px;font-size:13.33px;line-height:17.33px;color:#1a1a1a;">−3</div>
<div class="t" style="left:987.44px;top:133.03px;font-size:13.33px;line-height:17.33px;color:#1a1a1a;">−2</div>
<div class="t" style="left:987.44px;top:714.94px;font-size:13.33px;line-height:17.33px;color:#1a1a1a;">−2</div>
<div class="t" style="left:1095.32px;top:133.03px;font-size:13.33px;line-height:17.33px;color:#1a1a1a;">−1</div>
<div class="t" style="left:1095.32px;top:714.94px;font-size:13.33px;line-height:17.33px;color:#1a1a1a;">−1</div>
<div class="t" style="left:1207.09px;top:133.03px;font-size:13.33px;line-height:17.33px;color:#1a1a1a;">0</div>
<div class="t" style="left:1207.09px;top:714.94px;font-size:13.33px;line-height:17.33px;color:#1a1a1a;">0</div>
<div class="t" style="left:80.00px;top:199.44px;font-size:13.33px;line-height:17.33px;color:#1a1a1a;font-family:'Liberation Mono', monospace;letter-spacing:0.121px;">70.632</div>
<div class="t" style="left:80.00px;top:260.83px;font-size:13.33px;line-height:17.33px;color:#1a1a1a;font-family:'Liberation Mono', monospace;letter-spacing:0.121px;">70.630</div>
<div class="t" style="left:80.00px;top:322.24px;font-size:13.33px;line-height:17.33px;color:#1a1a1a;font-family:'Liberation Mono', monospace;letter-spacing:0.121px;">70.628</div>
<div class="t" style="left:80.00px;top:383.63px;font-size:13.33px;line-height:17.33px;color:#1a1a1a;font-family:'Liberation Mono', monospace;letter-spacing:0.121px;">70.626</div>
<div class="t" style="left:80.00px;top:445.04px;font-size:13.33px;line-height:17.33px;color:#1a1a1a;font-family:'Liberation Mono', monospace;letter-spacing:0.121px;">70.624</div>
<div class="t" style="left:80.00px;top:506.44px;font-size:13.33px;line-height:17.33px;color:#1a1a1a;font-family:'Liberation Mono', monospace;letter-spacing:0.121px;">70.622</div>
<div class="t" style="left:80.00px;top:567.84px;font-size:13.33px;line-height:17.33px;color:#1a1a1a;font-family:'Liberation Mono', monospace;letter-spacing:0.121px;">70.620</div>
<div class="t" style="left:80.00px;top:629.24px;font-size:13.33px;line-height:17.33px;color:#1a1a1a;font-family:'Liberation Mono', monospace;letter-spacing:0.121px;">70.618</div>
<div class="t" style="left:80.00px;top:690.64px;font-size:13.33px;line-height:17.33px;color:#1a1a1a;font-family:'Liberation Mono', monospace;letter-spacing:0.121px;">70.616</div>
<div class="t" style="left:1156.50px;top:733.76px;font-size:14.67px;line-height:19.07px;color:#1a1a1a;letter-spacing:-0.105px;">Time (s)</div>
<div class="t" style="left:65px;top:210px;font-size:14.67px;line-height:18px;color:#1a1a1a;transform:translate(-50%,-50%) rotate(-90deg);letter-spacing:-0.05px">Amplitude (mV)</div>
<div class="b" style="left:214.00px;top:168.00px;width:193.50px;height:28.50px;background:#f3f3f3;"></div>
<svg class="b" style="left:221px;top:172px;overflow:visible;" width="13" height="21" viewBox="0 0 13 21"><g transform="translate(0.000,0.800)"><path d="M5.500 2l4.300 7h-8.600zM5.500 18l4.300-7h-8.600z" fill="#dcdcdc"/></g></svg>
<div class="b" style="left:237.00px;top:173.30px;width:17.60px;height:17.70px;background:#2878b9;"></div>
<div class="b" style="left:258.00px;top:173.30px;width:144.00px;height:17.70px;background:#868686;"></div>
<div class="t" style="left:262.00px;top:171.90px;font-size:16px;line-height:20.8px;color:#f6f6f6;letter-spacing:-0.775px;">Demod 1 Sample R</div>
<div class="b" style="left:1138.80px;top:219.60px;width:71.20px;height:38.10px;background:#f0f0f0;"></div>
<div class="t" style="left:1151.60px;top:220.82px;font-size:13.5px;line-height:17.55px;color:#1a1a1a;letter-spacing:0.580px;">X2: 0 s</div>
<div class="t" style="left:1151.60px;top:239.62px;font-size:13.5px;line-height:17.55px;color:#1a1a1a;letter-spacing:-0.507px;">Δ = +0 s</div>
<div class="b" style="left:158.00px;top:676.00px;width:80.00px;height:38.00px;background:#f0f0f0;"></div>
<div class="t" style="left:169.50px;top:678.15px;font-size:13px;line-height:16.9px;color:#1a1a1a;letter-spacing:0.142px;">▼Y2: 0 V</div>
<div class="t" style="left:174.00px;top:696.23px;font-size:13.5px;line-height:17.55px;color:#1a1a1a;letter-spacing:-0.544px;">Δ = +0 V</div>
<svg class="b" style="left:0px;top:0px;overflow:visible;" width="61" height="721" viewBox="0 0 61 721"><g transform="translate(20.8,498.4) scale(1.0)" fill="none" stroke="#333" stroke-width="1.3">
<path d="M2.500 0v28.200M8.800 0v28.200M0 3.100h19.500M0 8.800h19.500"/>
<path d="M16.300 16.300H13.500Q12 16.300 12 17.800V21.100Q12 22.600 13.500 22.600H16.300M23.100 16.300H25.900Q27.400 16.300 27.400 17.800V21.100Q27.400 22.600 25.900 22.600H23.100M18.200 16.300h3" stroke-width="1.700"/>
<path d="M17.300 24.800l0.900 1.400M22.100 24.800l-0.900 1.400M19.700 25v1.500M17.500 14.200l0.800-1.200M21.900 14.200l-0.800-1.200" stroke-width="0.9"/></g><path d="M43.5 498.5v6.5l5.2-3.25zM43.5 550v6.5l5.2-3.25z" fill="#1a1a1a"/><circle cx="37.6" cy="654.5" r="10" fill="none" stroke="#333" stroke-width="1.5"/><path d="M30.53 661.57l-7.38 7.38M32.60 654.5h10.00" stroke="#333" stroke-width="1.5" fill="none"/><circle cx="37.6" cy="695.3" r="10" fill="none" stroke="#333" stroke-width="1.5"/><path d="M30.53 702.37l-7.38 7.38M32.60 695.3h10.00M37.6 690.30v10.00" stroke="#333" stroke-width="1.5" fill="none"/></svg>
<div class="t" style="left:20.50px;top:556.17px;font-size:14.67px;line-height:19.07px;color:#1a1a1a;letter-spacing:-0.519px;">Man</div>
<div class="t" style="left:20.50px;top:596.87px;font-size:14.67px;line-height:19.07px;color:#1a1a1a;letter-spacing:-0.538px;">Lin</div>
<svg class="b" style="left:0px;top:0px;overflow:visible;" width="501" height="791" viewBox="0 0 501 791"><circle cx="152.3" cy="750.2" r="10" fill="none" stroke="#333" stroke-width="1.5"/><path d="M145.23 757.27l-7.38 7.38M147.30 750.2h10.00M152.3 745.20v10.00" stroke="#333" stroke-width="1.5" fill="none"/><circle cx="192.3" cy="750.2" r="10" fill="none" stroke="#333" stroke-width="1.5"/><path d="M185.23 757.27l-7.38 7.38M187.30 750.2h10.00" stroke="#333" stroke-width="1.5" fill="none"/><g transform="translate(320.3,738.2) scale(1.0)" fill="none" stroke="#333" stroke-width="1.3">
<path d="M2.500 0v28.200M8.800 0v28.200M0 3.100h19.500M0 8.800h19.500"/>
<path d="M16.300 16.300H13.500Q12 16.300 12 17.800V21.100Q12 22.600 13.500 22.600H16.300M23.100 16.300H25.900Q27.400 16.300 27.400 17.800V21.100Q27.400 22.600 25.900 22.600H23.100M18.200 16.300h3" stroke-width="1.700"/>
<path d="M17.300 24.800l0.900 1.400M22.100 24.800l-0.900 1.400M19.700 25v1.500M17.500 14.200l0.800-1.200M21.900 14.200l-0.800-1.200" stroke-width="0.9"/></g><path d="M290.3 743.7h6.8l-3.4-5.6z" fill="#1a1a1a"/><path d="M342.1 743.7h6.8l-3.4-5.6z" fill="#1a1a1a"/><path d="M393.70000000000005 743.7h6.8l-3.4-5.6z" fill="#1a1a1a"/><path d="M434.3 743.7h6.8l-3.4-5.6z" fill="#1a1a1a"/><g fill="none" stroke="#333" stroke-width="1.150"><path d="M371.300 747v12.500h11.300"/><path d="M371.800 757.200c1-7.500 3.200-11.200 4.400-5.500s2.400 7.600 3.600 4.200 1.600-2.800 2.300-2.600"/><path d="M389.300 758.500v-9.600h4.600l0.700 2.300h5.700v7.300z"/></g><path d="M384.300 752.600l2.800 2.700-2.800 2.700z" fill="#222"/><g stroke="#444" stroke-width="1.300" stroke-dasharray="2 0.700"><path d="M412 748.900h10.800M412 751.700h10.800M412 754.500h10.800M412 757.300h10.800"/></g><path d="M424.300 751.600l3.800 3.400-3.800 3.400z" fill="none" stroke="#555" stroke-width="0.800"/><path d="M429.600 758.800v-10h5.700l0.600 2.600h6v7.400z" fill="#2a2a2a"/><g transform="translate(453.5,743.5) scale(1.0)"><g fill="none" stroke="#333" stroke-width="1.200"><path d="M9.800 15H6.200C2.800 15 1 13 1 11c0-2.200 1.800-3.800 4.300-4C6 3.700 8.800 1.500 12.400 1.500c3.300 0 6 1.800 6.900 4.500.4-.1.800-.1 1.200-.1 3 0 5.200 2 5.200 4.500 0 2.600-2.200 4.600-5.200 4.600H17.400"/><path d="M13.600 19V10"/></g><path d="M13.600 6.800l3 4.800h-6z" fill="#333"/></g></svg>
<div class="t" style="left:227.40px;top:743.87px;font-size:14.67px;line-height:19.07px;color:#c8c8c8;letter-spacing:-0.688px;">Lin</div>
<div class="t" style="left:268.40px;top:743.47px;font-size:14.67px;line-height:19.07px;color:#1a1a1a;letter-spacing:-1.946px;">FS</div>
<div class="b" style="left:1223.50px;top:125.00px;width:321.50px;height:658.00px;background:#f4f4f4;border:1px solid #d4d4d4;"></div>
<div class="b" style="left:1224.50px;top:126.00px;width:319.50px;height:28.30px;background:#e4e4e4;border-bottom:1px solid #d0d0d0;"></div>
<div class="b" style="left:1286.40px;top:126.00px;width:48.40px;height:29.30px;background:#f4f4f4;border-left:1px solid #d0d0d0;border-right:1px solid #d0d0d0;"></div>
<div class="t" style="left:1231.70px;top:130.66px;font-size:14.67px;line-height:19.07px;color:#1a1a1a;letter-spacing:-0.049px;">Control</div>
<div class="t" style="left:1295.40px;top:130.66px;font-size:14.67px;line-height:19.07px;color:#1a1a1a;letter-spacing:-0.105px;">Math</div>
<div class="b" style="left:1230.00px;top:161.00px;width:88.00px;height:21.70px;background:#0088c4;border-radius:2px;"></div>
<svg class="b" style="left:1252px;top:165px;overflow:visible;" width="15" height="15" viewBox="0 0 15 15"><rect x="3" y="2.7" width="8.4" height="8.4" fill="none" stroke="#eee" stroke-width="1.6"/></svg>
<div class="t" style="left:1271.30px;top:162.47px;font-size:14.67px;line-height:19.07px;color:#f4f4f4;font-weight:bold;letter-spacing:-1.597px;">Stop</div>
<div class="t" style="left:1413.50px;top:162.47px;font-size:14.67px;line-height:19.07px;color:#1a1a1a;letter-spacing:-0.174px;">Length</div>
<div class="b" style="left:1460.90px;top:162.00px;width:75.10px;height:19.50px;background:#f8f8f8;border:1px solid #dedede;border-radius:2px;"></div>
<div class="t" style="left:1464.50px;top:163.74px;font-size:13.33px;line-height:17.33px;color:#333;letter-spacing:-0.565px;">10 s</div>
<svg class="b" style="left:1521px;top:166px;overflow:visible;" width="11" height="11" viewBox="0 0 11 11"><g transform="translate(0.500,0.500)"><path d="M1.2 2h7.6L5 8.6z" fill="#333"/></g></svg>
<div class="b" style="left:1230.60px;top:186.30px;width:95.40px;height:19.70px;background:#f8f8f8;border:1px solid #dedede;border-radius:2px;"></div>
<div class="t" style="left:1233.50px;top:187.84px;font-size:13.33px;line-height:17.33px;color:#333;letter-spacing:-0.093px;">Histogram</div>
<svg class="b" style="left:1311px;top:190px;overflow:visible;" width="11" height="11" viewBox="0 0 11 11"><g transform="translate(0.300,0.500)"><path d="M1.2 2h7.6L5 8.6z" fill="#333"/></g></svg>
<div class="b" style="left:1329.70px;top:186.30px;width:98.50px;height:19.70px;background:#f8f8f8;border:1px solid #dedede;border-radius:2px;"></div>
<div class="t" style="left:1332.50px;top:187.84px;font-size:13.33px;line-height:17.33px;color:#333;letter-spacing:-0.151px;">Average</div>
<svg class="b" style="left:1413px;top:190px;overflow:visible;" width="11" height="11" viewBox="0 0 11 11"><g transform="translate(0.300,0.500)"><path d="M1.2 2h7.6L5 8.6z" fill="#333"/></g></svg>
<div class="b" style="left:1431.30px;top:185.20px;width:44.50px;height:21.40px;background:#4a4a4a;border-radius:2px;"></div>
<div class="t" style="left:1441.25px;top:187.14px;font-size:13.33px;line-height:17.33px;color:#f0f0f0;font-weight:bold;letter-spacing:-0.706px;">Add</div>
<div class="b" style="left:1477.80px;top:186.30px;width:58.90px;height:19.70px;background:#f0f0f0;border:1px solid #e2e2e2;border-radius:2px;"></div>
<div class="t" style="left:1486.05px;top:187.14px;font-size:13.33px;line-height:17.33px;color:#333;letter-spacing:0.167px;">Add All</div>
<div class="b" style="left:1230.00px;top:209.50px;width:308.00px;height:488.70px;background:#fdfdfd;border:1px solid #dcdcdc;"></div>
<div class="t" style="left:1231.50px;top:215.74px;font-size:13.33px;line-height:17.33px;color:#1a1a1a;font-weight:bold;letter-spacing:-0.178px;">Histogram</div>
<div class="b" style="left:1231.20px;top:235.80px;width:19.70px;height:19.80px;background:#2878b9;"></div>
<div class="t" style="left:1253.50px;top:236.74px;font-size:13.33px;line-height:17.33px;color:#1a1a1a;letter-spacing:-0.185px;">Average</div>
<div class="t" style="left:1358.30px;top:237.04px;font-size:13.33px;line-height:17.33px;color:#1a1a1a;font-family:'Liberation Mono', monospace;letter-spacing:-0.090px;">70.624794921</div>
<div class="t" style="left:1457.40px;top:236.74px;font-size:13.33px;line-height:17.33px;color:#1a1a1a;">mV</div>
<div class="b" style="left:1231.20px;top:261.00px;width:19.70px;height:19.80px;background:#2878b9;"></div>
<div class="t" style="left:1253.50px;top:261.94px;font-size:13.33px;line-height:17.33px;color:#1a1a1a;letter-spacing:-0.107px;">Std Deviation</div>
<div class="t" style="left:1366.30px;top:262.24px;font-size:13.33px;line-height:17.33px;color:#1a1a1a;font-family:'Liberation Mono', monospace;letter-spacing:-0.099px;">1.552272020</div>
<div class="t" style="left:1457.40px;top:261.94px;font-size:13.33px;line-height:17.33px;color:#1a1a1a;">µV</div>
<div class="b" style="left:1231.20px;top:286.00px;width:19.70px;height:19.80px;background:#2878b9;"></div>
<div class="t" style="left:1253.50px;top:286.94px;font-size:13.33px;line-height:17.33px;color:#1a1a1a;letter-spacing:-0.129px;">Bin Size</div>
<div class="t" style="left:1358.30px;top:287.24px;font-size:13.33px;line-height:17.33px;color:#1a1a1a;font-family:'Liberation Mono', monospace;letter-spacing:-0.090px;">32.608695609</div>
<div class="t" style="left:1457.40px;top:286.94px;font-size:13.33px;line-height:17.33px;color:#1a1a1a;">nV</div>
<div class="b" style="left:1231.20px;top:311.40px;width:19.70px;height:19.80px;background:#2878b9;"></div>
<div class="t" style="left:1253.50px;top:312.33px;font-size:13.33px;line-height:17.33px;color:#1a1a1a;letter-spacing:-0.422px;">SNR</div>
<div class="t" style="left:1358.30px;top:312.63px;font-size:13.33px;line-height:17.33px;color:#1a1a1a;font-family:'Liberation Mono', monospace;letter-spacing:-0.090px;">93.158348608</div>
<div class="t" style="left:1457.40px;top:312.33px;font-size:13.33px;line-height:17.33px;color:#1a1a1a;">dB</div>
<div class="b" style="left:1231.20px;top:336.60px;width:19.70px;height:19.80px;background:#2878b9;"></div>
<div class="t" style="left:1253.50px;top:337.53px;font-size:13.33px;line-height:17.33px;color:#1a1a1a;letter-spacing:0.260px;">Rice Fit</div>
<div class="t" style="left:1358.30px;top:337.83px;font-size:13.33px;line-height:17.33px;color:#1a1a1a;font-family:'Liberation Mono', monospace;letter-spacing:-0.090px;">99.999877177</div>
<div class="t" style="left:1457.40px;top:337.53px;font-size:13.33px;line-height:17.33px;color:#1a1a1a;">%</div>
<div class="b" style="left:1536.60px;top:221.50px;width:1.00px;height:1.00px;background:#e08030;"></div><div class="b" style="left:1536.60px;top:224.50px;width:1.00px;height:1.00px;background:#e08030;"></div>
<div class="b" style="left:1230.50px;top:689.00px;width:109.30px;height:8.80px;background:#cfcfcf;"></div>
<svg class="b" style="left:1230px;top:700px;overflow:visible;" width="81" height="23" viewBox="0 0 81 23"><g transform="translate(4.5,3.2)" fill="none" stroke="#444" stroke-width="1.1"><path d="M0.5 3.5h12M4.3 3.5V1.200h4.400V3.500M1.800 3.500l0.600 11h8.200l0.600-11M4.600 6v6.500M6.500 6v6.500M8.400 6v6.500"/></g><g transform="translate(61.5,3.2)" fill="none" stroke="#444" stroke-width="1.1"><path d="M0.5 3.5h12M4.3 3.5V1.200h4.400V3.500M1.800 3.500l0.600 11h8.200l0.600-11M4.600 6v6.500M6.500 6v6.500M8.400 6v6.500"/></g></svg>
<div class="t" style="left:1253.80px;top:702.04px;font-size:13.33px;line-height:17.33px;color:#333;letter-spacing:-0.157px;">All</div>
<div class="t" style="left:1436.20px;top:701.47px;font-size:14.67px;line-height:19.07px;color:#1a1a1a;letter-spacing:-0.166px;">Unit Prefix</div>
<div class="b" style="left:1507.30px;top:703.00px;width:29.70px;height:17.00px;background:#009bde;border-radius:9px;"></div>
<div class="b" style="left:1521.60px;top:704.60px;width:13.80px;height:13.80px;background:#fff;border-radius:7px;"></div>
<div class="t" style="left:1232.00px;top:732.76px;font-size:14.67px;line-height:19.07px;color:#000;font-weight:bold;letter-spacing:-0.754px;">Save</div>
<div class="b" style="left:1230.00px;top:753.30px;width:65.80px;height:21.30px;background:#4a4a4a;border-radius:2px;"></div>
<div class="t" style="left:1249.00px;top:754.67px;font-size:14.67px;line-height:19.07px;color:#e6e6e6;letter-spacing:-1.082px;">CSV</div>
<svg class="b" style="left:1305px;top:752px;overflow:visible;" width="31" height="27" viewBox="0 0 31 27"><g transform="translate(1.2,2.8) scale(0.98)"><g fill="none" stroke="#333" stroke-width="1.200"><path d="M9.800 15H6.200C2.800 15 1 13 1 11c0-2.200 1.800-3.800 4.300-4C6 3.700 8.800 1.500 12.400 1.500c3.300 0 6 1.800 6.900 4.500.4-.1.800-.1 1.200-.1 3 0 5.200 2 5.200 4.500 0 2.600-2.200 4.600-5.200 4.600H17.400"/><path d="M13.600 19V10"/></g><path d="M13.600 6.800l3 4.800h-6z" fill="#333"/></g></svg>
<div class="t" style="left:1337.50px;top:754.94px;font-size:13.33px;line-height:17.33px;color:#333;letter-spacing:0.086px;">Net Link</div>
</div>
<div class="b" style="left:0;top:0;width:1565px;height:865px;background:rgba(0,0,0,.337)"></div>
</div>
<svg class="b" style="left:65px;top:322px;overflow:visible;" width="37" height="3" viewBox="0 0 37 3"><g transform="translate(0.300,0.200)"><path d="M0 1H35.7" stroke="#1aa3e8" stroke-width="1.7" stroke-dasharray="3.3 3.26" fill="none"/></g></svg>
<svg class="b" style="left:234px;top:322px;overflow:visible;" width="191" height="3" viewBox="0 0 191 3"><g transform="translate(0.500,0.200)"><path d="M0 1H189.5" stroke="#1aa3e8" stroke-width="1.7" stroke-dasharray="3.3 3.26" fill="none"/></g></svg>
<svg class="b" style="left:678px;top:322px;overflow:visible;" width="380" height="3" viewBox="0 0 380 3"><g transform="translate(0.500,0.200)"><path d="M0 1H378.5" stroke="#1aa3e8" stroke-width="1.7" stroke-dasharray="3.3 3.26" fill="none"/></g></svg>
<svg class="b" style="left:1174px;top:322px;overflow:visible;" width="120" height="3" viewBox="0 0 120 3"><g transform="translate(0.000,0.200)"><path d="M0 1H119" stroke="#1aa3e8" stroke-width="1.7" stroke-dasharray="3.3 3.26" fill="none"/></g></svg>
<svg class="b" style="left:1440px;top:322px;overflow:visible;" width="40" height="3" viewBox="0 0 40 3"><g transform="translate(0.000,0.200)"><path d="M0 1H39.5" stroke="#1aa3e8" stroke-width="1.7" stroke-dasharray="3.3 3.26" fill="none"/></g></svg>
<svg class="b" style="left:65px;top:591px;overflow:visible;" width="37" height="3" viewBox="0 0 37 3"><g transform="translate(0.300,0.400)"><path d="M0 1H35.7" stroke="#1aa3e8" stroke-width="1.7" stroke-dasharray="3.3 3.26" fill="none"/></g></svg>
<svg class="b" style="left:201px;top:591px;overflow:visible;" width="185" height="3" viewBox="0 0 185 3"><g transform="translate(0.000,0.400)"><path d="M0 1H184.60000000000002" stroke="#1aa3e8" stroke-width="1.7" stroke-dasharray="3.3 3.26" fill="none"/></g></svg>
<svg class="b" style="left:544px;top:591px;overflow:visible;" width="106" height="3" viewBox="0 0 106 3"><g transform="translate(0.600,0.400)"><path d="M0 1H104.79999999999995" stroke="#1aa3e8" stroke-width="1.7" stroke-dasharray="3.3 3.26" fill="none"/></g></svg>
<div class="t" style="left:18.00px;top:295.96px;font-size:8px;line-height:10.4px;color:#666;letter-spacing:0.113px;">Signal Input</div>
<div class="t" style="left:26.00px;top:318.57px;font-size:7.5px;line-height:9.75px;color:#666;letter-spacing:0.118px;">+V</div>
<svg class="b" style="left:39px;top:311px;overflow:visible;" width="25" height="25" viewBox="0 0 25 25"><g transform="translate(0.200,0.200)"><circle cx="12" cy="12" r="9.9" fill="#9bdcfb" stroke="#33abee" stroke-width="1.4"/><circle cx="12" cy="12" r="3.300" fill="#b4e3fa" stroke="#7f8b96" stroke-width="1.5"/></g></svg>
<div class="t" style="left:27.40px;top:566.26px;font-size:8px;line-height:10.4px;color:#6e6e6e;letter-spacing:-0.104px;">Trigger In</div>
<div class="t" style="left:31.00px;top:587.67px;font-size:7.5px;line-height:9.75px;color:#666;">2</div>
<svg class="b" style="left:39px;top:580px;overflow:visible;" width="25" height="25" viewBox="0 0 25 25"><g transform="translate(0.200,0.400)"><circle cx="12" cy="12" r="9.9" fill="#9bdcfb" stroke="#33abee" stroke-width="1.4"/><circle cx="12" cy="12" r="3.300" fill="#b4e3fa" stroke="#7f8b96" stroke-width="1.5"/></g></svg>
<div class="t" style="left:1479.00px;top:296.16px;font-size:8px;line-height:10.4px;color:#666;letter-spacing:0.164px;">Aux Output</div>
<div class="t" style="left:1505.50px;top:318.57px;font-size:7.5px;line-height:9.75px;color:#666;">1</div>
<svg class="b" style="left:1477px;top:311px;overflow:visible;" width="25" height="25" viewBox="0 0 25 25"><g transform="translate(0.800,0.200)"><circle cx="12" cy="12" r="9.9" fill="#9bdcfb" stroke="#33abee" stroke-width="1.4"/><circle cx="12" cy="12" r="3.300" fill="#b4e3fa" stroke="#7f8b96" stroke-width="1.5"/></g></svg>
<div class="b" style="left:101.00px;top:294.00px;width:7.00px;height:58.50px;background:#3a3a3a;border-radius:2px 0 0 2px;"></div>
<div class="b" style="left:101.00px;top:314.00px;width:5.30px;height:18.00px;background:#62e08c;"></div>
<div class="b" style="left:101.00px;top:297.80px;width:5.30px;height:0.80px;background:#777;"></div><div class="b" style="left:101.00px;top:348.60px;width:5.30px;height:0.80px;background:#777;"></div>
<div class="blk" style="left:106.300px;top:294px;width:128px;height:58.500px"></div>
<svg class="b" style="left:115px;top:303px;overflow:visible;" width="16" height="13" viewBox="0 0 16 13"><g transform="translate(0.300,0.200)"><g fill="none" stroke="#333" stroke-width="0.9"><circle cx="8.500" cy="6" r="4.800"/><path d="M0.400 6h6.200M4.700 4.100l1.900 1.900-1.900 1.900"/></g><circle cx="8.800" cy="6" r="0.900" fill="#333"/></g></svg>
<div class="t" style="left:132.80px;top:303.91px;font-size:8.4px;line-height:10.92px;color:#4a4a4a;letter-spacing:-0.020px;">Voltage Input</div>
<div class="dv" style="left:114.500px;top:321.800px;width:112px;background:#f3f3f3"></div>
<svg class="b" style="left:212px;top:329px;overflow:visible;" width="15" height="15" viewBox="0 0 15 15"><g transform="translate(0.500,0.800)"><g fill="none" stroke="#333" stroke-width="0.9" stroke-linejoin="round"><path d="M0.900 2.400L2.400 0.900 9 7.500 7.500 9z"/><path d="M8.200 8.200L13.200 13.200" stroke-width="1.1"/></g></g></svg>
<svg class="b" style="left:98px;top:320px;overflow:visible;" width="7" height="7" viewBox="0 0 7 7"><g transform="translate(0.500,0.200)"><circle cx="3" cy="3" r="1.400" fill="#16161e"/></g></svg>
<svg class="b" style="left:231px;top:320px;overflow:visible;" width="7" height="7" viewBox="0 0 7 7"><g transform="translate(0.300,0.200)"><circle cx="3" cy="3" r="1.400" fill="#16161e"/></g></svg>
<div class="blk" style="left:424px;top:197px;width:254.500px;height:252px;border:1px solid #1a9fe0;border-radius:2px"></div>
<div class="b" style="left:424.00px;top:197.00px;width:6.00px;height:252.00px;background:#33c9ca;border-radius:2px 0 0 2px;"></div>
<div class="t" style="left:438.00px;top:208.11px;font-size:8.4px;line-height:10.92px;color:#4a4a4a;letter-spacing:-0.069px;">Demodulator</div>
<div class="b" style="left:488.00px;top:206.90px;width:13.00px;height:13.00px;background:#2cc5c8;border-radius:50%;"></div><div class="t" style="left:492.00px;top:207.93px;font-size:9px;line-height:11.7px;color:#fff;font-weight:bold;">1</div>
<div class="t" style="left:601.50px;top:207.53px;font-size:9px;line-height:11.7px;color:#333;font-weight:bold;letter-spacing:0.188px;">79.99994139 Hz</div>
<div class="dv" style="left:438px;top:226.400px;width:232px"></div>
<svg class="b" style="left:437px;top:233px;overflow:visible;" width="15" height="15" viewBox="0 0 15 15"><g transform="translate(0.000,0.600)"><g fill="none" stroke="#222" stroke-width="0.9"><circle cx="7" cy="7" r="6.200"/><path d="M2.600 7.600c1.200-3 2.600-3 4.400-0.600s3.200 2.400 4.400-0.600"/></g></g></svg>
<div class="t" style="left:453.70px;top:235.31px;font-size:8.4px;line-height:10.92px;color:#4a4a4a;letter-spacing:-0.192px;">Oscillator 1</div>
<svg class="b" style="left:626px;top:233px;overflow:visible;" width="15" height="15" viewBox="0 0 15 15"><g transform="translate(0.800,0.600)"><g fill="none" stroke="#333" stroke-width="0.9" stroke-linejoin="round"><path d="M0.900 2.400L2.400 0.900 9 7.500 7.500 9z"/><path d="M8.200 8.200L13.200 13.200" stroke-width="1.1"/></g></g></svg>
<div class="t" style="left:642.60px;top:235.31px;font-size:8.4px;line-height:10.92px;color:#4a4a4a;letter-spacing:-0.104px;">Probe</div>
<div class="dv" style="left:438px;top:253.900px;width:232px"></div>
<div class="t" style="left:438.00px;top:263.11px;font-size:8.4px;line-height:10.92px;color:#4a4a4a;letter-spacing:0.029px;">Input</div>
<div class="b" style="left:511.40px;top:260.70px;width:84.20px;height:14.90px;background:#fff;border:1px solid #e9e9e9;border-radius:2px;"></div>
<div class="t" style="left:517.30px;top:263.11px;font-size:8.4px;line-height:10.92px;color:#4a4a4a;letter-spacing:-0.020px;">Voltage Input</div>
<svg class="b" style="left:582px;top:265px;overflow:visible;" width="9" height="7" viewBox="0 0 9 7"><g transform="translate(0.800,0.800)"><path d="M0.600 1h6.800L4 4.800z" fill="#222"/></g></svg>
<div class="t" style="left:438.00px;top:284.01px;font-size:8.4px;line-height:10.92px;color:#4a4a4a;letter-spacing:-0.379px;">Phase</div>
<div class="b" style="left:511.40px;top:281.70px;width:84.20px;height:15.60px;background:#f0f0f0;"></div>
<div class="t" style="left:552.20px;top:284.01px;font-size:8.4px;line-height:10.92px;color:#4a4a4a;letter-spacing:0.016px;">0.000 deg</div>
<div class="dv" style="left:438px;top:302.400px;width:232px"></div>
<div class="t" style="left:438.00px;top:311.81px;font-size:8.4px;line-height:10.92px;color:#333;font-weight:bold;letter-spacing:-0.437px;">Low Pass Filter</div>
<div class="t" style="left:438.00px;top:332.81px;font-size:8.4px;line-height:10.92px;color:#4a4a4a;letter-spacing:-0.109px;">Time Constant</div>
<div class="b" style="left:511.40px;top:330.40px;width:84.20px;height:15.40px;background:#fff;border:1px solid #e9e9e9;border-radius:2px;"></div>
<div class="t" style="left:557.20px;top:332.81px;font-size:8.4px;line-height:10.92px;color:#4a4a4a;letter-spacing:-0.293px;">7.646 ms</div>
<div class="t" style="left:438.00px;top:353.81px;font-size:8.4px;line-height:10.92px;color:#4a4a4a;letter-spacing:-0.182px;">NEP Bandwidth</div>
<div class="b" style="left:511.40px;top:351.40px;width:84.20px;height:15.40px;background:#fff;border:1px solid #e9e9e9;border-radius:2px;"></div>
<div class="t" style="left:554.20px;top:353.81px;font-size:8.4px;line-height:10.92px;color:#4a4a4a;letter-spacing:-0.349px;">12.262 Hz</div>
<div class="t" style="left:438.00px;top:374.81px;font-size:8.4px;line-height:10.92px;color:#4a4a4a;letter-spacing:-0.084px;">3dB Bandwidth</div>
<div class="b" style="left:511.40px;top:372.40px;width:84.20px;height:15.40px;background:#fff;border:1px solid #e9e9e9;border-radius:2px;"></div>
<div class="t" style="left:555.70px;top:374.81px;font-size:8.4px;line-height:10.92px;color:#4a4a4a;letter-spacing:-0.537px;">10.613 Hz</div>
<div class="t" style="left:438.00px;top:395.81px;font-size:8.4px;line-height:10.92px;color:#4a4a4a;letter-spacing:-0.243px;">Order</div>
<div class="b" style="left:511.40px;top:393.40px;width:31.00px;height:15.40px;background:#fff;border:1px solid #e9e9e9;border-radius:2px;"></div>
<div class="t" style="left:517.50px;top:395.81px;font-size:8.4px;line-height:10.92px;color:#4a4a4a;">3</div>
<svg class="b" style="left:530px;top:398px;overflow:visible;" width="9" height="7" viewBox="0 0 9 7"><g transform="translate(0.000,0.600)"><path d="M0.600 1h6.800L4 4.800z" fill="#222"/></g></svg>
<div class="t" style="left:438.00px;top:416.71px;font-size:8.4px;line-height:10.92px;color:#4a4a4a;letter-spacing:-0.280px;">Sinc</div>
<div class="b" style="left:511.00px;top:416.70px;width:19.00px;height:10.70px;background:#009bde;border-radius:5.35px;"></div><svg class="b" style="left:519px;top:417px;overflow:visible;" width="11" height="11" viewBox="0 0 11 11"><g transform="translate(0.600,0.000)"><circle cx="5.05" cy="5.05" r="4.05" fill="#fff"/></g></svg>
<div class="blk" style="left:101px;top:549.200px;width:99.600px;height:86.800px"></div>
<div class="b" style="left:101.00px;top:549.20px;width:5.30px;height:86.80px;background:#0a9be2;"></div>
<svg class="b" style="left:114px;top:558px;overflow:visible;" width="16" height="13" viewBox="0 0 16 13"><g transform="translate(0.000,0.600)"><g fill="none" stroke="#333" stroke-width="0.9"><circle cx="8.500" cy="6" r="4.800"/><path d="M0.400 6h6.200M4.700 4.100l1.900 1.900-1.900 1.900"/></g><circle cx="8.800" cy="6" r="0.900" fill="#333"/></g></svg>
<div class="t" style="left:130.00px;top:559.31px;font-size:8.4px;line-height:10.92px;color:#4a4a4a;letter-spacing:-0.043px;">Trigger Input</div>
<div class="b" style="left:179.50px;top:558.10px;width:13.00px;height:13.00px;background:#c3e9fb;border-radius:50%;"></div><div class="t" style="left:183.50px;top:559.13px;font-size:9px;line-height:11.7px;color:#2ba4e4;font-weight:bold;">2</div>
<div class="dv" style="left:114.500px;top:578px;width:78px"></div>
<div class="t" style="left:114.50px;top:587.01px;font-size:8.4px;line-height:10.92px;color:#4a4a4a;letter-spacing:-0.121px;">Trigger State:</div>
<div class="b" style="left:166.20px;top:584.30px;width:21.20px;height:7.20px;background:#62e08c;border-radius:1.500px;"></div><div class="b" style="left:166.20px;top:593.50px;width:21.20px;height:7.20px;background:#62e08c;border-radius:1.500px;"></div>
<div class="dv" style="left:114.500px;top:605.800px;width:78px"></div>
<svg class="b" style="left:178px;top:613px;overflow:visible;" width="15" height="15" viewBox="0 0 15 15"><g transform="translate(0.800,0.800)"><g fill="none" stroke="#333" stroke-width="0.9" stroke-linejoin="round"><path d="M0.900 2.400L2.400 0.900 9 7.500 7.500 9z"/><path d="M8.200 8.200L13.200 13.200" stroke-width="1.1"/></g></g></svg>
<svg class="b" style="left:98px;top:589px;overflow:visible;" width="7" height="7" viewBox="0 0 7 7"><g transform="translate(0.500,0.400)"><circle cx="3" cy="3" r="1.400" fill="#16161e"/></g></svg>
<svg class="b" style="left:197px;top:589px;overflow:visible;" width="7" height="7" viewBox="0 0 7 7"><g transform="translate(0.600,0.400)"><circle cx="3" cy="3" r="1.400" fill="#16161e"/></g></svg>
<div class="blk" style="left:385.600px;top:549px;width:158.400px;height:87px"></div>
<div class="b" style="left:385.60px;top:549.00px;width:5.40px;height:87.00px;background:#ff9933;"></div>
<div class="t" style="left:399.40px;top:559.21px;font-size:8.4px;line-height:10.92px;color:#4a4a4a;letter-spacing:-0.089px;">Demodulator</div>
<div class="b" style="left:449.20px;top:558.00px;width:13.00px;height:13.00px;background:#ff9933;border-radius:50%;"></div><div class="t" style="left:453.20px;top:559.03px;font-size:9px;line-height:11.7px;color:#fff;font-weight:bold;">2</div>
<div class="dv" style="left:399px;top:578.300px;width:137px"></div>
<div class="b" style="left:398.90px;top:584.30px;width:26.90px;height:16.40px;background:#62e08c;border-radius:1.500px;"></div>
<svg class="b" style="left:400px;top:585px;overflow:visible;" width="15" height="15" viewBox="0 0 15 15"><g transform="translate(0.500,0.500)"><g fill="none" stroke="#2a3a30" stroke-width="0.9"><circle cx="7" cy="7" r="6.200"/><rect x="4.300" y="6.300" width="5.400" height="4.200" rx="0.500"/><path d="M5.300 6.300V5a1.700 1.700 0 0 1 3.400 0v1.300"/></g></g></svg>
<div class="t" style="left:416.50px;top:587.31px;font-size:8.4px;line-height:10.92px;color:#2a3a30;">1</div>
<div class="b" style="left:457.20px;top:584.30px;width:78.60px;height:16.40px;background:#ff9933;border-radius:1.500px;"></div>
<div class="t" style="left:459.75px;top:587.08px;font-size:8.6px;line-height:11.18px;color:#fff;font-weight:bold;letter-spacing:-0.431px;">External Refrerence</div>
<div class="dv" style="left:399px;top:605.400px;width:137px"></div>
<svg class="b" style="left:522px;top:614px;overflow:visible;" width="15" height="15" viewBox="0 0 15 15"><g transform="translate(0.600,0.000)"><g fill="none" stroke="#333" stroke-width="0.9" stroke-linejoin="round"><path d="M0.900 2.400L2.400 0.900 9 7.500 7.500 9z"/><path d="M8.200 8.200L13.200 13.200" stroke-width="1.1"/></g></g></svg>
<svg class="b" style="left:382px;top:589px;overflow:visible;" width="7" height="7" viewBox="0 0 7 7"><g transform="translate(0.800,0.400)"><circle cx="3" cy="3" r="1.400" fill="#16161e"/></g></svg>
<svg class="b" style="left:541px;top:589px;overflow:visible;" width="7" height="7" viewBox="0 0 7 7"><g transform="translate(0.200,0.400)"><circle cx="3" cy="3" r="1.400" fill="#16161e"/></g></svg>
<div class="blk" style="left:649.400px;top:535.200px;width:179px;height:114.400px"></div>
<div class="b" style="left:649.40px;top:535.20px;width:5.40px;height:114.40px;background:#ff9933;"></div>
<div class="t" style="left:662.70px;top:545.41px;font-size:8.4px;line-height:10.92px;color:#4a4a4a;letter-spacing:-0.135px;">PID Controller</div>
<div class="b" style="left:716.30px;top:544.20px;width:13.00px;height:13.00px;background:#ff9933;border-radius:50%;"></div><div class="t" style="left:720.30px;top:545.23px;font-size:9px;line-height:11.7px;color:#fff;font-weight:bold;">1</div>
<div class="b" style="left:735.00px;top:545.80px;width:18.70px;height:10.40px;background:#009bde;border-radius:5.20px;"></div><svg class="b" style="left:743px;top:546px;overflow:visible;" width="11" height="10" viewBox="0 0 11 10"><g transform="translate(0.600,0.100)"><circle cx="4.90" cy="4.90" r="3.90" fill="#fff"/></g></svg>
<div class="dv" style="left:662.500px;top:564.500px;width:158px"></div>
<div class="b" style="left:662.40px;top:570.50px;width:26.90px;height:16.40px;background:#62e08c;border-radius:1.500px;"></div>
<svg class="b" style="left:664px;top:571px;overflow:visible;" width="15" height="15" viewBox="0 0 15 15"><g transform="translate(0.000,0.700)"><g fill="none" stroke="#2a3a30" stroke-width="0.9"><circle cx="7" cy="7" r="6.200"/><rect x="4.300" y="6.300" width="5.400" height="4.200" rx="0.500"/><path d="M5.300 6.300V5a1.700 1.700 0 0 1 3.400 0v1.300"/></g></g></svg>
<div class="t" style="left:680.30px;top:573.51px;font-size:8.4px;line-height:10.92px;color:#2a3a30;">1</div>
<div class="b" style="left:692.30px;top:571.00px;width:40.70px;height:15.60px;background:#fff;border:1px solid #f0f0f0;border-radius:2px;"></div>
<div class="t" style="left:697.70px;top:573.31px;font-size:8.4px;line-height:10.92px;color:#4a4a4a;">f</div><div class="t" style="left:700.50px;top:577.33px;font-size:5.5px;line-height:7.15px;color:#4a4a4a;">1</div>
<div class="t" style="left:736.30px;top:572.32px;font-size:9.5px;line-height:12.35px;color:#333;font-weight:bold;letter-spacing:-0.079px;">79.99994139 Hz</div>
<div class="dv" style="left:662.500px;top:591.600px;width:158px"></div>
<div class="t" style="left:662.40px;top:601.11px;font-size:8.4px;line-height:10.92px;color:#4a4a4a;letter-spacing:-0.128px;">Auto Mode</div>
<div class="b" style="left:736.30px;top:598.30px;width:84.70px;height:16.30px;background:#fff;border:1px solid #e9e9e9;border-radius:2px;"></div>
<div class="t" style="left:741.90px;top:601.11px;font-size:8.4px;line-height:10.92px;color:#4a4a4a;letter-spacing:-0.056px;">Adaptive</div>
<svg class="b" style="left:807px;top:603px;overflow:visible;" width="9" height="7" viewBox="0 0 9 7"><g transform="translate(0.200,0.900)"><path d="M0.600 1h6.800L4 4.800z" fill="#222"/></g></svg>
<div class="dv" style="left:662.500px;top:619.700px;width:158px"></div>
<svg class="b" style="left:806px;top:627px;overflow:visible;" width="15" height="15" viewBox="0 0 15 15"><g transform="translate(0.800,0.800)"><g fill="none" stroke="#333" stroke-width="0.9" stroke-linejoin="round"><path d="M0.900 2.400L2.400 0.900 9 7.500 7.500 9z"/><path d="M8.200 8.200L13.200 13.200" stroke-width="1.1"/></g></g></svg>
<svg class="b" style="left:646px;top:589px;overflow:visible;" width="7" height="7" viewBox="0 0 7 7"><g transform="translate(0.600,0.500)"><circle cx="3" cy="3" r="1.400" fill="#16161e"/></g></svg>
<svg class="b" style="left:825px;top:589px;overflow:visible;" width="7" height="7" viewBox="0 0 7 7"><g transform="translate(0.300,0.500)"><circle cx="3" cy="3" r="1.400" fill="#16161e"/></g></svg>
<div class="blk" style="left:1057px;top:279.700px;width:117px;height:86.800px"></div>
<div class="b" style="left:1057.00px;top:279.70px;width:5.30px;height:86.80px;background:#0a9be2;"></div>
<div class="t" style="left:1070.00px;top:289.91px;font-size:8.4px;line-height:10.92px;color:#4a4a4a;letter-spacing:-0.147px;">Aux Router</div>
<div class="b" style="left:1113.20px;top:288.70px;width:13.00px;height:13.00px;background:#c3e9fb;border-radius:50%;"></div><div class="t" style="left:1117.20px;top:289.73px;font-size:9px;line-height:11.7px;color:#2ba4e4;font-weight:bold;">1</div>
<div class="dv" style="left:1070px;top:308.300px;width:96px"></div>
<div class="t" style="left:1070.00px;top:317.11px;font-size:8.4px;line-height:10.92px;color:#4a4a4a;letter-spacing:-0.214px;">Signal:</div>
<div class="b" style="left:1097.00px;top:315.00px;width:68.70px;height:15.60px;background:#f0f0f0;"></div>
<div class="t" style="left:1103.20px;top:317.51px;font-size:8.4px;line-height:10.92px;color:#4a4a4a;">X</div>
<div class="dv" style="left:1070px;top:336px;width:96px"></div>
<svg class="b" style="left:1152px;top:344px;overflow:visible;" width="15" height="15" viewBox="0 0 15 15"><g transform="translate(0.200,0.000)"><g fill="none" stroke="#333" stroke-width="0.9" stroke-linejoin="round"><path d="M0.900 2.400L2.400 0.900 9 7.500 7.500 9z"/><path d="M8.200 8.200L13.200 13.200" stroke-width="1.1"/></g></g></svg>
<svg class="b" style="left:1054px;top:320px;overflow:visible;" width="7" height="7" viewBox="0 0 7 7"><g transform="translate(0.200,0.200)"><circle cx="3" cy="3" r="1.400" fill="#16161e"/></g></svg>
<svg class="b" style="left:1170px;top:320px;overflow:visible;" width="7" height="7" viewBox="0 0 7 7"><g transform="translate(0.900,0.200)"><circle cx="3" cy="3" r="1.400" fill="#16161e"/></g></svg>
<div class="b" style="left:1430.00px;top:279.70px;width:10.00px;height:86.80px;background:#3a3a3a;border-radius:0 2px 2px 0;"></div>
<div class="b" style="left:1434.60px;top:318.30px;width:5.40px;height:1.60px;background:#62e08c;"></div>
<div class="b" style="left:1434.60px;top:283.30px;width:5.40px;height:0.80px;background:#777;"></div><div class="b" style="left:1434.60px;top:362.20px;width:5.40px;height:0.80px;background:#777;"></div>
<div class="blk" style="left:1293px;top:279.700px;width:141.600px;height:86.800px"></div>
<div class="b" style="left:1293.00px;top:279.70px;width:5.00px;height:86.80px;background:#0a9be2;"></div>
<svg class="b" style="left:1305px;top:289px;overflow:visible;" width="16" height="13" viewBox="0 0 16 13"><g transform="translate(0.300,0.200)"><g fill="none" stroke="#333" stroke-width="0.9"><path d="M9.300 2.800A4.600 4.600 0 1 0 9.300 9.200"/><path d="M6 6h8M12.200 4.200l1.800 1.800-1.800 1.800"/></g><circle cx="4.800" cy="6" r="0.900" fill="#333"/></g></svg>
<div class="t" style="left:1322.00px;top:289.91px;font-size:8.4px;line-height:10.92px;color:#4a4a4a;letter-spacing:-0.114px;">Aux Output</div>
<div class="b" style="left:1365.70px;top:288.70px;width:13.00px;height:13.00px;background:#c3e9fb;border-radius:50%;"></div><div class="t" style="left:1369.70px;top:289.73px;font-size:9px;line-height:11.7px;color:#2ba4e4;font-weight:bold;">1</div>
<div class="dv" style="left:1306px;top:308.300px;width:121px"></div>
<div class="t" style="left:1306.00px;top:317.11px;font-size:8.4px;line-height:10.92px;color:#4a4a4a;letter-spacing:-0.095px;">Output Value:</div>
<div class="b" style="left:1358.40px;top:315.00px;width:68.60px;height:15.60px;background:#f0f0f0;"></div>
<div class="t" style="left:1376.50px;top:317.11px;font-size:8.4px;line-height:10.92px;color:#4a4a4a;letter-spacing:-0.089px;">706.200 mV</div>
<div class="dv" style="left:1306px;top:336px;width:121px"></div>
<svg class="b" style="left:1412px;top:344px;overflow:visible;" width="15" height="15" viewBox="0 0 15 15"><g transform="translate(0.600,0.000)"><g fill="none" stroke="#333" stroke-width="0.9" stroke-linejoin="round"><path d="M0.900 2.400L2.400 0.900 9 7.500 7.500 9z"/><path d="M8.200 8.200L13.200 13.200" stroke-width="1.1"/></g></g></svg>
<svg class="b" style="left:1290px;top:320px;overflow:visible;" width="7" height="7" viewBox="0 0 7 7"><g transform="translate(0.200,0.200)"><circle cx="3" cy="3" r="1.400" fill="#16161e"/></g></svg>
<svg class="b" style="left:1436px;top:320px;overflow:visible;" width="7" height="7" viewBox="0 0 7 7"><g transform="translate(0.800,0.200)"><circle cx="3" cy="3" r="1.400" fill="#16161e"/></g></svg>
<div class="b" style="left:633.30px;top:82.20px;width:329.20px;height:45.40px;background:#fff;border-radius:1px;"></div>
<div class="t" style="left:644.60px;top:96.61px;font-size:13px;line-height:16.9px;color:#92a0b2;letter-spacing:0.502px;">Search for block...</div>
<svg class="b" style="left:1536px;top:76px;overflow:visible;" width="19" height="19" viewBox="0 0 19 19"><path d="M2.800 2.800l12.600 12.600M15.400 2.800L2.800 15.400" stroke="#fff" stroke-width="1.4" fill="none"/></svg>
<div class="card" style="left:14.300px;top:880px;width:112.600px;height:42.800px;border-radius:1px"></div>
<svg class="b" style="left:0px;top:0px;overflow:visible;" width="131" height="931" viewBox="0 0 131 931"><circle cx="37.2" cy="898.4" r="8.3" fill="none" stroke="#333" stroke-width="1.2"/><path d="M31.33 904.27l-6.81 6.81M33.05 898.4h8.30M37.2 894.25v8.30" stroke="#333" stroke-width="1.2" fill="none"/><circle cx="71.8" cy="898.4" r="8.3" fill="none" stroke="#333" stroke-width="1.2"/><path d="M65.93 904.27l-6.81 6.81M67.65 898.4h8.30" stroke="#333" stroke-width="1.2" fill="none"/><g fill="none" stroke="#333" stroke-width="1.2"><path d="M114.500 891.200l-8.200 8.200M106.300 893v6.400h6.400M95.200 911l8.200-8.200M103.400 909v-6.200h-6.400"/></g></svg>
<div class="card" style="left:1565.500px;top:76px;width:1904px;width:338.500px;height:412px;border-radius:0 2px 2px 0;box-shadow:0 2px 6px rgba(0,0,0,.18)"></div>
<div class="t" style="left:1587.30px;top:95.86px;font-size:16px;line-height:20.8px;color:#009bde;letter-spacing:0.006px;">Data Transfer</div>
<div class="b" style="left:1578.00px;top:121.00px;width:115.00px;height:3.00px;background:#009bde;"></div>
<div class="t" style="left:1715.40px;top:95.86px;font-size:16px;line-height:20.8px;color:#444;letter-spacing:0.152px;">Oscillators</div>
<svg class="b" style="left:1866px;top:96px;overflow:visible;" width="27" height="21" viewBox="0 0 27 21"><path d="M3.400 14.600l8.800-9 8.800 9" fill="none" stroke="#333" stroke-width="1.4"/></svg>
<div class="b" style="left:1569.20px;top:132.00px;width:329.80px;height:351.40px;background:#eeeeee;"></div>
<svg class="b" style="left:1583px;top:149px;overflow:visible;" width="17" height="13" viewBox="0 0 17 13"><path d="M2.500 3.200h11.300l-5.650 6.300z" fill="#333"/></svg>
<div class="t" style="left:1609.40px;top:144.94px;font-size:13.5px;line-height:17.55px;color:#333;font-weight:bold;letter-spacing:-0.251px;">Demodulators</div>
<div class="b" style="left:1578.00px;top:175.80px;width:313.00px;height:125.20px;background:#fff;box-shadow:0 1px 3px rgba(0,0,0,.22);border-radius:2px;"></div>
<div class="b" style="left:1578.00px;top:175.80px;width:9.00px;height:125.20px;background:#33c9ca;border-radius:2px 0 0 2px;"></div>
<div class="t" style="left:1596.20px;top:189.93px;font-size:13px;line-height:16.9px;color:#444;letter-spacing:0.477px;">Demodulator</div>
<div class="b" style="left:1680.40px;top:187.00px;width:21.20px;height:21.20px;background:#2cc5c8;border-radius:50%;"></div><div class="t" style="left:1687.52px;top:190.42px;font-size:12.5px;line-height:16.25px;color:#fff;font-weight:bold;">1</div>
<div class="b" style="left:1710.80px;top:189.00px;width:31.10px;height:18.00px;background:#009bde;border-radius:9.00px;"></div><svg class="b" style="left:1724px;top:189px;overflow:visible;" width="18" height="18" viewBox="0 0 18 18"><g transform="translate(0.800,0.900)"><circle cx="8.10" cy="8.10" r="7.10" fill="#fff"/></g></svg>
<div class="b" style="left:1596.00px;top:220.30px;width:285.50px;height:1.00px;background:#e8e8e8;"></div>
<div class="t" style="left:1596.20px;top:236.13px;font-size:13px;line-height:16.9px;color:#444;letter-spacing:0.159px;">Data Rate</div>
<div class="b" style="left:1737.00px;top:231.00px;width:113.50px;height:27.00px;background:#fff;border:1px solid #dddddd;border-radius:2px;"></div>
<div class="t" style="left:1778.80px;top:236.33px;font-size:13px;line-height:16.9px;color:#444;letter-spacing:0.119px;">1.67 kSa/s</div>
<svg class="b" style="left:1852px;top:232px;overflow:visible;" width="25" height="25" viewBox="0 0 25 25"><g fill="none" stroke="#222" stroke-width="1.1"><circle cx="12" cy="12" r="10.200"/><path d="M12 17.500V8.200M9.300 10.800L12 8l2.700 2.800"/><path d="M12 1.800v3M1.800 12h3M22.200 12h-3M4.800 4.800l2.100 2.100M19.200 4.800l-2.100 2.100M4.300 17.500l2.300-1.200M19.700 17.500l-2.300-1.200" stroke-width="1"/></g></svg>
<div class="t" style="left:1596.20px;top:271.93px;font-size:13px;line-height:16.9px;color:#444;letter-spacing:0.313px;">Transfer Mode</div>
<div class="b" style="left:1737.00px;top:266.00px;width:140.00px;height:27.00px;background:#eeeeee;border-radius:2px;"></div>
<div class="b" style="left:1739.00px;top:269.00px;width:67.00px;height:22.00px;background:#009bde;border-radius:2px;"></div>
<div class="t" style="left:1742.50px;top:272.41px;font-size:11.5px;line-height:14.95px;color:#fff;font-weight:bold;letter-spacing:-0.430px;">Continuous</div>
<div class="t" style="left:1816.70px;top:272.41px;font-size:11.5px;line-height:14.95px;color:#555;letter-spacing:0.114px;">Triggered</div>
<div class="b" style="left:1578.00px;top:306.30px;width:313.00px;height:124.90px;background:#fff;box-shadow:0 1px 3px rgba(0,0,0,.22);border-radius:2px;"></div>
<div class="b" style="left:1578.00px;top:306.30px;width:9.00px;height:124.90px;background:#d4d4d4;border-radius:2px 0 0 2px;"></div>
<div class="t" style="left:1596.20px;top:320.43px;font-size:13px;line-height:16.9px;color:#444;letter-spacing:0.477px;">Demodulator</div>
<div class="b" style="left:1680.40px;top:317.50px;width:21.20px;height:21.20px;background:#d6d6d6;border-radius:50%;"></div><div class="t" style="left:1687.52px;top:320.93px;font-size:12.5px;line-height:16.25px;color:#555;font-weight:bold;">2</div>
<div class="b" style="left:1710.80px;top:319.50px;width:31.10px;height:18.00px;background:#6a6a6a;border-radius:9.00px;"></div><svg class="b" style="left:1711px;top:320px;overflow:visible;" width="17" height="17" viewBox="0 0 17 17"><g transform="translate(0.700,0.400)"><circle cx="8.10" cy="8.10" r="7.10" fill="#fff"/></g></svg>
<div class="b" style="left:1596.00px;top:349.80px;width:285.50px;height:1.00px;background:#e8e8e8;"></div>
<div class="t" style="left:1596.20px;top:365.63px;font-size:13px;line-height:16.9px;color:#444;letter-spacing:0.159px;">Data Rate</div>
<div class="b" style="left:1737.00px;top:360.50px;width:113.50px;height:27.00px;background:#fff;border:1px solid #dddddd;border-radius:2px;"></div>
<div class="t" style="left:1778.80px;top:365.83px;font-size:13px;line-height:16.9px;color:#444;letter-spacing:0.119px;">1.67 kSa/s</div>
<svg class="b" style="left:1852px;top:361px;overflow:visible;" width="25" height="25" viewBox="0 0 25 25"><g transform="translate(0.000,0.500)"><g fill="none" stroke="#222" stroke-width="1.1"><circle cx="12" cy="12" r="10.200"/><path d="M12 17.500V8.200M9.300 10.800L12 8l2.700 2.800"/><path d="M12 1.800v3M1.800 12h3M22.200 12h-3M4.800 4.800l2.100 2.100M19.200 4.800l-2.100 2.100M4.300 17.500l2.300-1.200M19.700 17.500l-2.300-1.200" stroke-width="1"/></g></g></svg>
<div class="t" style="left:1596.20px;top:401.43px;font-size:13px;line-height:16.9px;color:#444;letter-spacing:0.313px;">Transfer Mode</div>
<div class="b" style="left:1737.00px;top:395.50px;width:140.00px;height:27.00px;background:#eeeeee;border-radius:2px;"></div>
<div class="b" style="left:1739.00px;top:398.50px;width:67.00px;height:22.00px;background:#009bde;border-radius:2px;"></div>
<div class="t" style="left:1742.50px;top:401.91px;font-size:11.5px;line-height:14.95px;color:#fff;font-weight:bold;letter-spacing:-0.430px;">Continuous</div>
<div class="t" style="left:1816.70px;top:401.91px;font-size:11.5px;line-height:14.95px;color:#555;letter-spacing:0.114px;">Triggered</div>
<svg class="b" style="left:1586px;top:454px;overflow:visible;" width="15" height="17" viewBox="0 0 15 17"><path d="M4.600 2.300v11.400l5.800-5.700z" fill="#333"/></svg>
<div class="t" style="left:1609.00px;top:452.64px;font-size:13.5px;line-height:17.55px;color:#333;font-weight:bold;letter-spacing:-0.233px;">PID Controllers</div>
</body></html>
